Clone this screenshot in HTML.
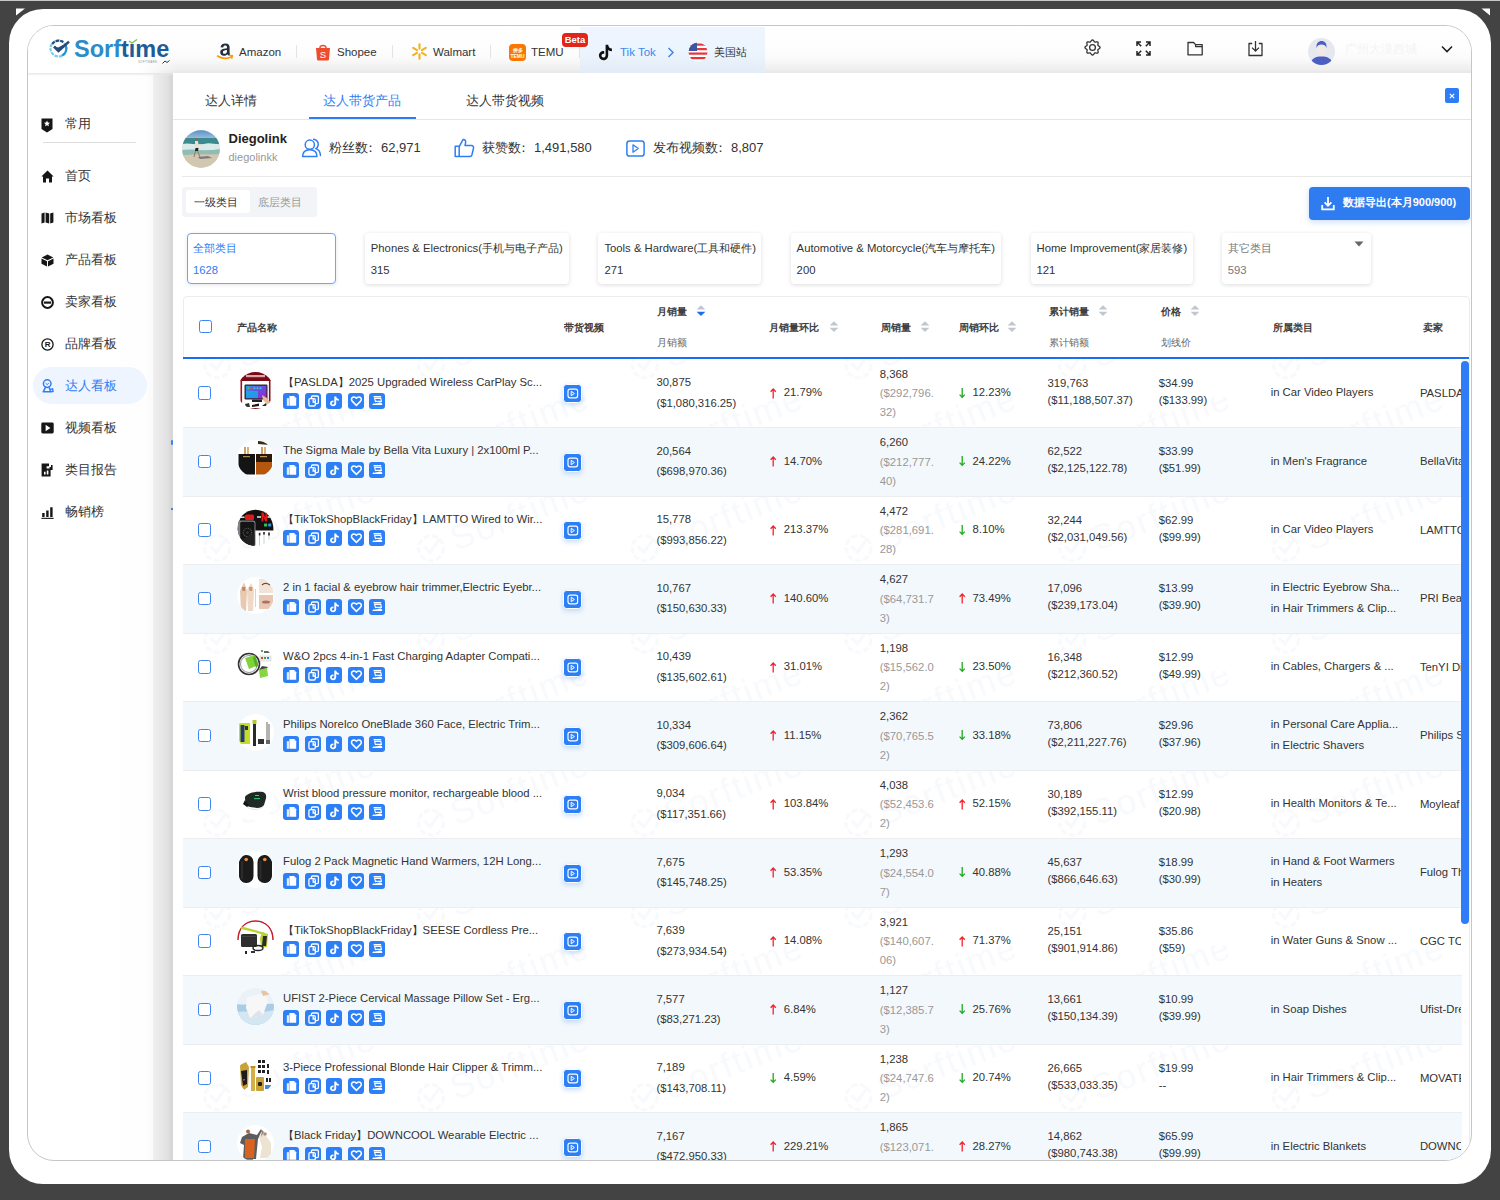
<!DOCTYPE html>
<html><head><meta charset="utf-8">
<style>
*{box-sizing:border-box;margin:0;padding:0}
html,body{width:1500px;height:1200px;overflow:hidden;background:#434343;font-family:"Liberation Sans",sans-serif;color:#333}
.abs{position:absolute}
#outer{position:absolute;left:9px;top:9px;width:1482px;height:1175px;background:#fff;border-radius:34px}
#frame{position:absolute;left:27px;top:25px;width:1445px;height:1136px;border:1px solid #c6c6c6;border-radius:27px;overflow:hidden;background:#fff}
#hdr{position:absolute;left:0;top:0;width:1443px;height:47px;background:linear-gradient(#fff 0,#fdfdfd 24px,#fbfbfb 31px,#f8f8f8 35px,#f3f3f3 39px,#eee 44px,#e8e8e8 46px,#e8e8e8 47px)}
#side{position:absolute;left:0;top:47px;width:146px;height:1100px}
#gap{position:absolute;left:92px;top:47px;width:53px;height:1100px;background:linear-gradient(90deg,#fefefe 0,#fefefe 25px,#fcfcfc 28px,#fafafa 33px,#efefef 33px,#e9e9e9 40px,#e0e0e0 48px,#d5d5d5 52px,#d8d8d8 53px)}
#panel{position:absolute;left:145px;top:47px;width:1298px;height:1100px;background:#fff}
.navt{position:absolute;top:19px;font-size:11.5px;line-height:14px;color:#333;white-space:nowrap}
.sep{position:absolute;top:19px;width:1px;height:13px;background:#e3e3e3}
.st{position:absolute;left:37px;font-size:13px;line-height:17px;color:#333;white-space:nowrap}
.sitem{position:absolute;left:0;width:120px;height:20px;font-size:13px;color:#333}
.sitem .ic{position:absolute;left:13px;top:3px;width:13px;height:13px}
.sitem .tx{position:absolute;left:37px;top:1px;white-space:nowrap}
</style></head><body>
<div class="abs" style="left:0;top:0;width:1500px;height:1px;background:#c8c8c8"></div>
<div id="outer"></div>
<svg class="abs" style="left:15px;top:8px" width="11" height="8" viewBox="0 0 11 8"><path d="M1 0.5 L10 0.5 L1 7.5 Z" fill="#fff"/></svg>
<svg class="abs" style="left:1481px;top:8px" width="10" height="8" viewBox="0 0 10 8"><path d="M0.5 0.5 L9 0.5 L9 7.5 Z" fill="#fff"/></svg>
<div id="frame">
  <div id="hdr">
    <div class="abs" style="left:0;top:0;width:150px;height:47px;background:linear-gradient(90deg,#fff 0,#fff 112px,rgba(255,255,255,0) 150px)"></div>
    <!-- logo -->
    <svg class="abs" style="left:21px;top:12px" width="22" height="22" viewBox="0 0 22 22">
      <circle cx="9.5" cy="10.5" r="8" fill="none" stroke="#7fcbe6" stroke-width="2.2" stroke-dasharray="3.4 1"/>
      <path d="M3.2 6 A8 8 0 0 1 14.5 4.2" fill="none" stroke="#2e4f7e" stroke-width="2.2" stroke-dasharray="3.4 1"/>
      <path d="M16.8 7.5 A8 8 0 0 1 13 17.6" fill="none" stroke="#2196d3" stroke-width="2.2"/>
      <path d="M5.2 8.6 L9.4 12.8 L19.8 3.8 L9.2 9.6 Z" fill="#2a4a78"/>
      <path d="M5 8.5 L9.5 13 L20 3.6" fill="none" stroke="#2a4a78" stroke-width="2.6" stroke-linejoin="miter"/>
    </svg>
    <div class="abs" style="left:46px;top:8px;font-size:23.5px;font-weight:bold;letter-spacing:0px;line-height:30px;white-space:nowrap"><span style="color:#2b8cc9">Sorf</span><span style="color:#1d5c98">time</span></div>
    <div class="abs" style="left:100px;top:12px;width:8px;height:6px;background:#fefefe"></div><svg class="abs" style="left:100px;top:13px" width="10" height="5" viewBox="0 0 10 5"><path d="M1 2 L4 4 L9 0.5" fill="none" stroke="#7cc242" stroke-width="1.3"/></svg>
    <div class="abs" style="left:110px;top:34px;width:45px;height:4px;font-size:3px;color:#999;white-space:nowrap;letter-spacing:0.3px">SOFTWARE</div><svg class="abs" style="left:134px;top:34px" width="8" height="4" viewBox="0 0 8 4"><path d="M0.5 3.5 L3 1 L5 2.5 L7.5 0.5" fill="none" stroke="#333" stroke-width="1"/></svg>

    <!-- amazon -->
    <svg class="abs" style="left:188px;top:16px" width="19" height="19" viewBox="0 0 19 19">
      <path d="M4.5 5.2 C5 2.6 7 1.6 9.4 1.6 C12.4 1.6 13.6 3.2 13.6 5.6 L13.6 10.6 C13.6 11.4 13.8 11.8 14.2 12.2 L12.4 13.6 C11.9 13.1 11.6 12.7 11.3 12.2 C10.3 13.2 9.2 13.8 7.8 13.8 C5.6 13.8 4.2 12.5 4.2 10.3 C4.2 7.6 6.4 6.5 11 6.2 L11 5.4 C11 4 10.4 3.6 9.3 3.6 C8.2 3.6 7.4 4.2 7.2 5.4 Z M11 8 C8 8.2 6.9 8.9 6.9 10.2 C6.9 11.2 7.5 11.8 8.4 11.8 C9.8 11.8 11 10.8 11 9.2 Z" fill="#232f3e"/>
      <path d="M1.6 14 C5.5 17 11.5 17.2 15.6 14.6" fill="none" stroke="#ff9900" stroke-width="1.6" stroke-linecap="round"/>
      <path d="M13.4 13.4 L16.4 13.6 L15.8 16.4" fill="none" stroke="#ff9900" stroke-width="1.4" stroke-linecap="round"/>
    </svg>
    <div class="navt" style="left:211px">Amazon</div>
    <div class="sep" style="left:268px"></div>

    <!-- shopee -->
    <svg class="abs" style="left:287px;top:17px" width="16" height="18" viewBox="0 0 16 18">
      <path d="M1 5 L15 5 L14 16.5 Q13.9 17.5 12.8 17.5 L3.2 17.5 Q2.1 17.5 2 16.5 Z" fill="#ee4d2d"/>
      <path d="M4.8 5.5 C4.8 1.5 11.2 1.5 11.2 5.5" fill="none" stroke="#ee4d2d" stroke-width="1.4"/>
      <text x="8" y="15" font-size="9.5" font-family="Liberation Sans" fill="#fff" text-anchor="middle">S</text>
    </svg>
    <div class="navt" style="left:309px">Shopee</div>
    <div class="sep" style="left:364px"></div>

    <!-- walmart -->
    <svg class="abs" style="left:383px;top:17px" width="17" height="17" viewBox="0 0 17 17">
      <g stroke="#f2b21b" stroke-width="2.1" stroke-linecap="round">
        <line x1="8.5" y1="1.2" x2="8.5" y2="5.6"/><line x1="8.5" y1="11.4" x2="8.5" y2="15.8"/>
        <line x1="2.2" y1="4.9" x2="6" y2="7.1"/><line x1="11" y1="9.9" x2="14.8" y2="12.1"/>
        <line x1="2.2" y1="12.1" x2="6" y2="9.9"/><line x1="11" y1="7.1" x2="14.8" y2="4.9"/>
      </g>
    </svg>
    <div class="navt" style="left:405px">Walmart</div>
    <div class="sep" style="left:462px"></div>

    <!-- temu -->
    <div class="abs" style="left:481px;top:18px;width:17px;height:17px;border-radius:4px;background:#fb7701;color:#fff;font-size:5px;line-height:6px;text-align:center;padding-top:3px;font-weight:bold">拼多<br>TEMU</div>
    <div class="navt" style="left:503px">TEMU</div>
    <div class="sep" style="left:551px"></div>

    <!-- tiktok active -->
    <div class="abs" style="left:552px;top:1px;width:185px;height:46px;background:linear-gradient(#eef5fe 0,#ecf4fd 55%,#e3ecf6 100%)"></div>
    <svg class="abs" style="left:570px;top:18px" width="15" height="17" viewBox="0 0 15 17">
      <path d="M7.6 0.8 L10.2 0.8 C10.4 3 11.6 4.4 13.9 4.6 L13.9 7.2 C12.5 7.2 11.3 6.8 10.2 6 L10.2 11.2 C10.2 14.2 8 16.2 5.4 16.2 C2.8 16.2 0.9 14.2 0.9 11.6 C0.9 8.8 3.2 6.8 6.2 7 L6.2 9.7 C4.6 9.4 3.5 10.3 3.5 11.6 C3.5 12.8 4.3 13.6 5.4 13.6 C6.6 13.6 7.6 12.8 7.6 11.2 Z" fill="#111"/>
    </svg>
    <div class="navt" style="left:592px;color:#3d88f0">Tik Tok</div>
    <svg class="abs" style="left:639px;top:21px" width="8" height="11" viewBox="0 0 8 11"><path d="M1.5 1 L6 5.5 L1.5 10" fill="none" stroke="#3d88f0" stroke-width="1.5"/></svg>
    <svg class="abs" style="left:660px;top:16px" width="20" height="20" viewBox="0 0 20 20">
      <defs><clipPath id="fc"><circle cx="10" cy="10" r="9.5"/></clipPath></defs>
      <g clip-path="url(#fc)">
        <rect x="0" y="0" width="20" height="20" fill="#fff"/>
        <rect x="0" y="1.5" width="20" height="2.2" fill="#e8343a"/>
        <rect x="0" y="6" width="20" height="2.2" fill="#e8343a"/>
        <rect x="0" y="10.5" width="20" height="2.2" fill="#e8343a"/>
        <rect x="0" y="15" width="20" height="2.2" fill="#e8343a"/>
        <rect x="0" y="0" width="9" height="9" fill="#3b55a5"/>
      </g>
    </svg>
    <div class="navt" style="left:686px;font-size:11px">美国站</div>

    <div class="abs" style="left:534px;top:7px;width:26px;height:14px;border-radius:4px;background:#e1251b;color:#fff;font-size:9.5px;font-weight:bold;line-height:14px;text-align:center">Beta</div>
    <!-- right icons -->
    <svg class="abs" style="left:1056px;top:13px" width="17" height="17" viewBox="0 0 17 17">
      <path d="M13.90 10.74 L13.85 11.14 L13.93 11.64 L14.07 12.22 L14.15 12.84 L14.09 13.40 L13.84 13.84 L13.40 14.09 L12.84 14.15 L12.22 14.07 L11.64 13.93 L11.14 13.85 L10.74 13.90 L10.42 14.15 L10.12 14.56 L9.81 15.07 L9.43 15.56 L8.99 15.92 L8.50 16.05 L8.01 15.92 L7.57 15.56 L7.19 15.07 L6.88 14.56 L6.58 14.15 L6.26 13.90 L5.86 13.85 L5.36 13.93 L4.78 14.07 L4.16 14.15 L3.60 14.09 L3.16 13.84 L2.91 13.40 L2.85 12.84 L2.93 12.22 L3.07 11.64 L3.15 11.14 L3.10 10.74 L2.85 10.42 L2.44 10.12 L1.93 9.81 L1.44 9.43 L1.08 8.99 L0.95 8.50 L1.08 8.01 L1.44 7.57 L1.93 7.19 L2.44 6.88 L2.85 6.58 L3.10 6.26 L3.15 5.86 L3.07 5.36 L2.93 4.78 L2.85 4.16 L2.91 3.60 L3.16 3.16 L3.60 2.91 L4.16 2.85 L4.78 2.93 L5.36 3.07 L5.86 3.15 L6.26 3.10 L6.58 2.85 L6.88 2.44 L7.19 1.93 L7.57 1.44 L8.01 1.08 L8.50 0.95 L8.99 1.08 L9.43 1.44 L9.81 1.93 L10.12 2.44 L10.42 2.85 L10.74 3.10 L11.14 3.15 L11.64 3.07 L12.22 2.93 L12.84 2.85 L13.40 2.91 L13.84 3.16 L14.09 3.60 L14.15 4.16 L14.07 4.78 L13.93 5.36 L13.85 5.86 L13.90 6.26 L14.15 6.58 L14.56 6.88 L15.07 7.19 L15.56 7.57 L15.92 8.01 L16.05 8.50 L15.92 8.99 L15.56 9.43 L15.07 9.81 L14.56 10.12 L14.15 10.42 Z" fill="none" stroke="#333" stroke-width="1.3" stroke-linejoin="round"/>
      <circle cx="8.5" cy="8.5" r="2.9" fill="none" stroke="#333" stroke-width="1.3"/>
    </svg>
    <svg class="abs" style="left:1107px;top:14px" width="17" height="17" viewBox="0 0 17 17">
      <g fill="none" stroke="#222" stroke-width="1.5">
        <path d="M2 6 L2 2 L6 2 M2 2 L6.2 6.2"/>
        <path d="M15 6 L15 2 L11 2 M15 2 L10.8 6.2"/>
        <path d="M2 11 L2 15 L6 15 M2 15 L6.2 10.8"/>
        <path d="M15 11 L15 15 L11 15 M15 15 L10.8 10.8"/>
      </g>
    </svg>
    <svg class="abs" style="left:1158px;top:14px" width="18" height="17" viewBox="0 0 18 17">
      <path d="M2 2.5 L7.6 2.5 L9.6 4.6 L16.2 4.6 L16.2 14.8 L2 14.8 Z M9.6 4.6 L9.6 6.6 L16.2 6.6" fill="none" stroke="#333" stroke-width="1.3" stroke-linejoin="round"/>
    </svg>
    <svg class="abs" style="left:1219px;top:14px" width="17" height="18" viewBox="0 0 17 18">
      <path d="M5.2 3.5 L2 3.5 L2 15.5 L15 15.5 L15 3.5 L11.8 3.5" fill="none" stroke="#333" stroke-width="1.3" stroke-linejoin="round"/>
      <path d="M8.5 1 L8.5 11 M5 7.6 L8.5 11 L12 7.6" fill="none" stroke="#333" stroke-width="1.3"/>
    </svg>
    <svg class="abs" style="left:1280px;top:12px" width="27" height="27" viewBox="0 0 27 27">
      <defs><clipPath id="av"><circle cx="13.5" cy="13.5" r="13.5"/></clipPath></defs>
      <circle cx="13.5" cy="13.5" r="13.5" fill="#e6e8f0"/>
      <g clip-path="url(#av)">
        <path d="M2 27 C3 20 8 18.5 13.5 18.5 C19 18.5 24 20 25 27 Z" fill="#4a5fc1"/>
        <ellipse cx="13.5" cy="11.5" rx="4.6" ry="6" fill="#f2e8e4"/>
        <path d="M8.6 10 C8 5 10.5 3 13.5 3 C16.8 3 19 5 18.4 10 C17.6 7.5 16 6.6 13.5 6.6 C11 6.6 9.4 7.5 8.6 10 Z" fill="#4a5fc1"/>
      </g>
    </svg>
    <div class="abs" style="left:1317px;top:15px;font-size:12px;color:#f4f4f4;white-space:nowrap">广州大漠西城</div>
    <svg class="abs" style="left:1412px;top:18px" width="14" height="10" viewBox="0 0 14 10"><path d="M2 2.5 L7 7.5 L12 2.5" fill="none" stroke="#222" stroke-width="1.6"/></svg>
  </div>

  <div id="gap"></div>
  <div id="side">
    <div class="abs" style="left:0;top:0;width:145px;height:3px;background:linear-gradient(#e6e6e6,rgba(240,240,240,0))"></div>
    <!-- frame coords offset: top of side = 47 -> subtract 73 from screen y -->
    <svg class="abs" style="left:13px;top:45px" width="12" height="15" viewBox="0 0 12 15">
      <path d="M0.5 0.5 L11.5 0.5 L11.5 11 L6 14.5 L0.5 11 Z" fill="#161616"/>
      <path d="M6 2.6 L6.9 4.6 L9 4.8 L7.4 6.2 L7.9 8.3 L6 7.2 L4.1 8.3 L4.6 6.2 L3 4.8 L5.1 4.6 Z" fill="#fff"/>
    </svg>
    <div class="st" style="top:41.5px">常用</div>
    <div class="abs" style="left:15px;top:69px;width:93px;height:1px;background:#dedede"></div>

    <svg class="abs" style="left:13px;top:97px" width="13" height="13" viewBox="0 0 13 13">
      <path d="M6.5 0.6 L12.6 6.4 L11 6.4 L11 12.6 L8 12.6 L8 8.6 L5 8.6 L5 12.6 L2 12.6 L2 6.4 L0.4 6.4 Z" fill="#161616"/>
    </svg>
    <div class="st" style="top:93.5px">首页</div>

    <svg class="abs" style="left:13px;top:139px" width="13" height="12" viewBox="0 0 13 12">
      <path d="M0.5 1.5 L3.6 0.5 L3.6 10.6 L0.5 11.6 Z M4.6 0.5 L8.2 1.5 L8.2 11.6 L4.6 10.6 Z M9.2 1.5 L12.4 0.5 L12.4 10.6 L9.2 11.6 Z" fill="#161616"/>
    </svg>
    <div class="st" style="top:135.5px">市场看板</div>

    <svg class="abs" style="left:13px;top:181px" width="13" height="13" viewBox="0 0 13 13">
      <path d="M6.5 0.4 L12.3 3.4 L6.5 6.3 L0.7 3.4 Z" fill="#161616"/>
      <path d="M0.5 4.4 L6 7.2 L6 12.6 L0.5 9.8 Z M7 7.2 L12.5 4.4 L12.5 9.8 L7 12.6 Z" fill="#161616"/>
    </svg>
    <div class="st" style="top:177.5px">产品看板</div>

    <svg class="abs" style="left:13px;top:223px" width="13" height="13" viewBox="0 0 13 13">
      <circle cx="6.5" cy="6.5" r="5.4" fill="none" stroke="#161616" stroke-width="2"/>
      <rect x="3" y="5.5" width="7" height="2.2" fill="#161616"/>
    </svg>
    <div class="st" style="top:219.5px">卖家看板</div>

    <svg class="abs" style="left:13px;top:265px" width="13" height="13" viewBox="0 0 13 13">
      <circle cx="6.5" cy="6.5" r="5.6" fill="none" stroke="#161616" stroke-width="1.3"/>
      <text x="6.6" y="9.4" font-size="8" font-family="Liberation Sans" font-weight="bold" fill="#161616" text-anchor="middle">R</text>
    </svg>
    <div class="st" style="top:261.5px">品牌看板</div>

    <div class="abs" style="left:5px;top:294px;width:114px;height:37px;border-radius:19px;background:#eef5ff"></div>
    <svg class="abs" style="left:14px;top:306px" width="12" height="14" viewBox="0 0 12 14">
      <circle cx="5.2" cy="4.6" r="3.8" fill="none" stroke="#2f7cf6" stroke-width="1.5"/>
      <path d="M3.6 4.2 L5.2 5.6 L6.8 4.2" fill="none" stroke="#2f7cf6" stroke-width="1"/>
      <path d="M3.6 8.2 L1.2 12.8 L8.8 12.8 L7 8.2" fill="none" stroke="#2f7cf6" stroke-width="1.5" stroke-linejoin="round"/>
      <path d="M8.2 10.4 L10.6 9.8 L11 12.4 L9 12.8" fill="none" stroke="#2f7cf6" stroke-width="1.4"/>
    </svg>
    <div class="st" style="top:303.5px;color:#2f7cf6">达人看板</div>

    <svg class="abs" style="left:13px;top:349px" width="13" height="12" viewBox="0 0 13 12">
      <rect x="0.3" y="0.5" width="12.4" height="11" rx="1.4" fill="#161616"/>
      <path d="M4.6 2.8 L9.4 6 L4.6 9.2 Z" fill="#fff"/>
    </svg>
    <div class="st" style="top:345.5px">视频看板</div>

    <svg class="abs" style="left:13px;top:390px" width="13" height="14" viewBox="0 0 13 14">
      <path d="M0.6 0.6 L8 0.6 L8 3.2 L5.6 3.2 L5.6 5.6 L8.6 5.6 L8.6 4 L10 4 L10 2 L11.6 2 L11.6 7 L9.6 7 L9.6 13.4 L0.6 13.4 Z" fill="#161616"/>
      <path d="M9 0.6 L12.4 0.6 L12.4 1.4 L9 1.4 Z M3 8.8 L4.6 8.8 L4.6 11.6 L3 11.6 Z M5.8 7.4 L7.4 7.4 L7.4 11.6 L5.8 11.6 Z" fill="#fff"/>
    </svg>
    <div class="st" style="top:387.5px">类目报告</div>

    <svg class="abs" style="left:13px;top:433px" width="13" height="13" viewBox="0 0 13 13">
      <path d="M1.2 7 L3.6 7 L3.6 11 L1.2 11 Z M5.2 4.4 L7.6 4.4 L7.6 11 L5.2 11 Z M9.2 1.2 L11.6 1.2 L11.6 11 L9.2 11 Z" fill="#161616"/>
      <rect x="0.4" y="11.8" width="12.2" height="1.1" fill="#161616"/>
    </svg>
    <div class="st" style="top:429.5px">畅销榜</div>
  </div>

<div class="abs" style="left:177.00px;top:67.00px;font-size:13px;line-height:16px;color:#333;white-space:nowrap">达人详情</div>
<div class="abs" style="left:294.50px;top:67.00px;font-size:13px;line-height:16px;color:#2f7df6;white-space:nowrap">达人带货产品</div>
<div class="abs" style="left:438.00px;top:67.00px;font-size:13px;line-height:16px;color:#333;white-space:nowrap">达人带货视频</div>
<div class="abs" style="left:145.00px;top:93.00px;width:1298px;height:1px;background:#e6e6e6"></div>
<div class="abs" style="left:281.00px;top:91.00px;width:107px;height:2px;background:#2f7df6"></div>
<div class="abs" style="left:1417.00px;top:62.00px;width:14px;height:15px;background:#2f7df6;border-radius:2px"></div>
<svg class="abs" style="left:1420.00px;top:66.00px" width="8" height="8" viewBox="0 0 8 8"><path d="M1.8 1.8 L6.2 6.2 M6.2 1.8 L1.8 6.2" stroke="#fff" stroke-width="1.2"/></svg>
<svg class="abs" style="left:154.00px;top:103.50px" width="38" height="38" viewBox="0 0 38 38"><defs><clipPath id="avc"><circle cx="19" cy="19" r="18.8"/></clipPath>
<linearGradient id="sky" x1="0" y1="0" x2="0" y2="1"><stop offset="0" stop-color="#5a8fc9"/><stop offset="1" stop-color="#9cc3df"/></linearGradient></defs>
<g clip-path="url(#avc)">
<rect width="38" height="38" fill="#cfc6b4"/>
<rect width="38" height="9" fill="url(#sky)"/>
<rect y="8" width="38" height="6" fill="#3c8a8f"/>
<path d="M0 14 C8 12 14 16 22 14 C28 12 34 15 38 14 L38 20 C30 22 20 19 10 22 L0 21 Z" fill="#d9ece9"/>
<path d="M0 20 C10 18 22 22 38 19 L38 24 C26 25 12 23 0 26 Z" fill="#8fbcb4"/>
<rect y="25" width="38" height="13" fill="#d2c7b0"/>
<path d="M16 27 L26 26 L30 28 L18 29 Z" fill="#5a5a60" opacity="0.7"/>
<circle cx="14.5" cy="9.5" r="1.4" fill="#8a6a50"/>
<path d="M13 11 L16 11 L17 18 L15.5 19 L13 18 Z" fill="#e8e0d6"/>
<path d="M13.5 18 L16.5 18 L16 21 L13 21 Z" fill="#222"/>
<path d="M13.5 21 L12 27 M15.5 21 L18 27" stroke="#9a7a5a" stroke-width="1"/>
</g></svg>
<div class="abs" style="left:200.50px;top:105.00px;font-size:13px;line-height:16px;font-weight:bold;color:#222;white-space:nowrap">Diegolink</div>
<div class="abs" style="left:200.50px;top:124.00px;font-size:11px;line-height:14px;color:#999;white-space:nowrap">diegolinkk</div>
<svg class="abs" style="left:273.00px;top:112.00px" width="21" height="20" viewBox="0 0 21 20"><g fill="none" stroke="#2f7df6" stroke-width="1.5" stroke-linecap="round"><circle cx="8.8" cy="6.7" r="4.6"/><path d="M1.6 18.6 C1.6 14 4.6 11.8 8.8 11.8 C13 11.8 16 14 16 18.6 Z" stroke-linejoin="round"/><path d="M12.6 1.2 C15.6 1.8 17.4 4.2 17.2 6.8 C17 8.6 16.2 9.8 15 10.6 C17.6 11.6 19.4 14 19.4 17.6"/></g></svg>
<div class="abs" style="left:301.00px;top:114.00px;font-size:13px;line-height:16px;color:#333;white-space:nowrap">粉丝数<span style="position:relative;left:-4px">：</span>62,971</div>
<svg class="abs" style="left:426.00px;top:112.00px" width="21" height="20" viewBox="0 0 21 20"><path d="M1.2 8.2 L5.2 8.2 L5.2 18.6 L1.2 18.6 Z M5.2 8.6 L9 1.6 C10.8 1.4 12 2.6 11.6 4.6 L11 7.6 L17.6 7.6 C19 7.6 19.8 8.8 19.5 10.2 L17.9 17 C17.6 18 16.8 18.6 15.8 18.6 L5.2 18.6" fill="none" stroke="#2f7df6" stroke-width="1.5" stroke-linejoin="round"/></svg>
<div class="abs" style="left:454.00px;top:114.00px;font-size:13px;line-height:16px;color:#333;white-space:nowrap">获赞数<span style="position:relative;left:-4px">：</span>1,491,580</div>
<svg class="abs" style="left:598.00px;top:113.50px" width="19" height="17" viewBox="0 0 19 17"><rect x="0.9" y="0.9" width="17.2" height="15.2" rx="2.6" fill="none" stroke="#2f7df6" stroke-width="1.5"/><path d="M7 4.8 L12.2 8.5 L7 12.2 Z" fill="none" stroke="#2f7df6" stroke-width="1.3" stroke-linejoin="round"/></svg>
<div class="abs" style="left:625.00px;top:114.00px;font-size:13px;line-height:16px;color:#333;white-space:nowrap">发布视频数<span style="position:relative;left:-4px">：</span>8,807</div>
<div class="abs" style="left:154.00px;top:150.00px;width:1289px;height:1px;background:#e8e8e8"></div>
<div class="abs" style="left:153.50px;top:160.50px;width:135px;height:30px;background:#f2f4f7;border-radius:3px"></div>
<div class="abs" style="left:157.50px;top:164.00px;width:64px;height:22.5px;background:#fff;border-radius:3px"></div>
<div class="abs" style="left:166.00px;top:168.50px;font-size:11px;line-height:14px;color:#333;white-space:nowrap">一级类目</div>
<div class="abs" style="left:230.00px;top:168.50px;font-size:11px;line-height:14px;color:#999;white-space:nowrap">底层类目</div>
<div class="abs" style="left:1281.00px;top:161.00px;width:161px;height:33px;background:#2e7cf0;border-radius:4px;box-shadow:0 2px 6px rgba(46,124,240,0.25)"></div>
<svg class="abs" style="left:1293.00px;top:170.00px" width="14" height="15" viewBox="0 0 14 15"><path d="M7 1 L7 9.6 M3.6 6.4 L7 9.8 L10.4 6.4" fill="none" stroke="#fff" stroke-width="1.8"/><path d="M1.2 9 L1.2 13.4 L12.8 13.4 L12.8 9" fill="none" stroke="#fff" stroke-width="1.8"/></svg>
<div class="abs" style="left:1315.00px;top:169.00px;font-size:11px;line-height:14px;color:#fff;font-weight:bold;white-space:nowrap">数据导出(本月900/900)</div>
<div class="abs" style="left:159.00px;top:206.50px;width:148.7px;height:51px;border:1px solid #6ea6f7;border-radius:4px;background:#fff;box-shadow:0 1px 4px rgba(0,0,0,0.10)"></div>
<div class="abs" style="left:165.00px;top:215.00px;font-size:11.3px;line-height:14px;color:#2f7df6;white-space:nowrap">全部类目</div>
<div class="abs" style="left:165.00px;top:236.50px;font-size:11.3px;line-height:14px;color:#2f7df6;white-space:nowrap">1628</div>
<div class="abs" style="left:336.80px;top:206.50px;width:204.5px;height:51px;border-radius:4px;background:#fff;box-shadow:0 1px 4px rgba(0,0,0,0.14)"></div>
<div class="abs" style="left:342.80px;top:215.00px;font-size:11.3px;line-height:14px;color:#333;white-space:nowrap">Phones &amp; Electronics(手机与电子产品)</div>
<div class="abs" style="left:342.80px;top:236.50px;font-size:11.3px;line-height:14px;color:#333;white-space:nowrap">315</div>
<div class="abs" style="left:570.40px;top:206.50px;width:162.8px;height:51px;border-radius:4px;background:#fff;box-shadow:0 1px 4px rgba(0,0,0,0.14)"></div>
<div class="abs" style="left:576.40px;top:215.00px;font-size:11.3px;line-height:14px;color:#333;white-space:nowrap">Tools &amp; Hardware(工具和硬件)</div>
<div class="abs" style="left:576.40px;top:236.50px;font-size:11.3px;line-height:14px;color:#333;white-space:nowrap">271</div>
<div class="abs" style="left:762.60px;top:206.50px;width:210.8px;height:51px;border-radius:4px;background:#fff;box-shadow:0 1px 4px rgba(0,0,0,0.14)"></div>
<div class="abs" style="left:768.60px;top:215.00px;font-size:11.3px;line-height:14px;color:#333;white-space:nowrap">Automotive &amp; Motorcycle(汽车与摩托车)</div>
<div class="abs" style="left:768.60px;top:236.50px;font-size:11.3px;line-height:14px;color:#333;white-space:nowrap">200</div>
<div class="abs" style="left:1002.50px;top:206.50px;width:162.2px;height:51px;border-radius:4px;background:#fff;box-shadow:0 1px 4px rgba(0,0,0,0.14)"></div>
<div class="abs" style="left:1008.50px;top:215.00px;font-size:11.3px;line-height:14px;color:#333;white-space:nowrap">Home Improvement(家居装修)</div>
<div class="abs" style="left:1008.50px;top:236.50px;font-size:11.3px;line-height:14px;color:#333;white-space:nowrap">121</div>
<div class="abs" style="left:1193.80px;top:206.50px;width:149.0px;height:51px;border-radius:4px;background:#fff;box-shadow:0 1px 4px rgba(0,0,0,0.14)"></div>
<div class="abs" style="left:1199.80px;top:215.00px;font-size:11.3px;line-height:14px;color:#777;white-space:nowrap">其它类目</div>
<div class="abs" style="left:1199.80px;top:236.50px;font-size:11.3px;line-height:14px;color:#777;white-space:nowrap">593</div>
<svg class="abs" style="left:1326.00px;top:215.00px" width="10" height="6" viewBox="0 0 10 6"><path d="M0.5 0.5 L9.5 0.5 L5 5.5 Z" fill="#666"/></svg>
<div class="abs" style="left:154.50px;top:269.50px;width:1287px;height:900px;border:1px solid #ececec;border-radius:4px;background:#fff"></div>
<div class="abs" style="left:171.00px;top:294.00px;width:13px;height:13.3px;border:1.5px solid #3d84f5;border-radius:2.5px;background:#fff"></div>
<div class="abs" style="left:209.00px;top:294.92px;font-size:10.34px;line-height:13px;color:#404040;font-weight:bold;white-space:nowrap;">产品名称</div>
<div class="abs" style="left:535.80px;top:294.92px;font-size:10.34px;line-height:13px;color:#404040;font-weight:bold;white-space:nowrap;">带货视频</div>
<div class="abs" style="left:629.00px;top:279.22px;font-size:10.34px;line-height:13px;color:#404040;font-weight:bold;white-space:nowrap;">月销量</div>
<svg class="abs" style="left:667.50px;top:279.00px" width="10" height="12" viewBox="0 0 10 12"><path d="M0.6 4.6 L5 0.3 L9.4 4.6 Z" fill="#c2c6ce"/><path d="M0.6 6.7 L9.4 6.7 L5 11 Z" fill="#1a6df5"/></svg>
<div class="abs" style="left:629.00px;top:310.12px;font-size:10.34px;line-height:13px;color:#666;font-weight:normal;white-space:nowrap;">月销额</div>
<div class="abs" style="left:741.00px;top:294.92px;font-size:10.34px;line-height:13px;color:#404040;font-weight:bold;white-space:nowrap;">月销量环比</div>
<svg class="abs" style="left:801.00px;top:295.00px" width="10" height="12" viewBox="0 0 10 12"><path d="M0.6 4.6 L5 0.3 L9.4 4.6 Z" fill="#c2c6ce"/><path d="M0.6 6.7 L9.4 6.7 L5 11 Z" fill="#c2c6ce"/></svg>
<div class="abs" style="left:853.00px;top:294.92px;font-size:10.34px;line-height:13px;color:#404040;font-weight:bold;white-space:nowrap;">周销量</div>
<svg class="abs" style="left:891.50px;top:295.00px" width="10" height="12" viewBox="0 0 10 12"><path d="M0.6 4.6 L5 0.3 L9.4 4.6 Z" fill="#c2c6ce"/><path d="M0.6 6.7 L9.4 6.7 L5 11 Z" fill="#c2c6ce"/></svg>
<div class="abs" style="left:930.80px;top:294.92px;font-size:10.34px;line-height:13px;color:#404040;font-weight:bold;white-space:nowrap;">周销环比</div>
<svg class="abs" style="left:979.30px;top:295.00px" width="10" height="12" viewBox="0 0 10 12"><path d="M0.6 4.6 L5 0.3 L9.4 4.6 Z" fill="#c2c6ce"/><path d="M0.6 6.7 L9.4 6.7 L5 11 Z" fill="#c2c6ce"/></svg>
<div class="abs" style="left:1020.50px;top:279.22px;font-size:10.34px;line-height:13px;color:#404040;font-weight:bold;white-space:nowrap;">累计销量</div>
<svg class="abs" style="left:1069.50px;top:279.00px" width="10" height="12" viewBox="0 0 10 12"><path d="M0.6 4.6 L5 0.3 L9.4 4.6 Z" fill="#c2c6ce"/><path d="M0.6 6.7 L9.4 6.7 L5 11 Z" fill="#c2c6ce"/></svg>
<div class="abs" style="left:1020.50px;top:310.12px;font-size:10.34px;line-height:13px;color:#666;font-weight:normal;white-space:nowrap;">累计销额</div>
<div class="abs" style="left:1133.30px;top:279.22px;font-size:10.34px;line-height:13px;color:#404040;font-weight:bold;white-space:nowrap;">价格</div>
<svg class="abs" style="left:1161.50px;top:279.00px" width="10" height="12" viewBox="0 0 10 12"><path d="M0.6 4.6 L5 0.3 L9.4 4.6 Z" fill="#c2c6ce"/><path d="M0.6 6.7 L9.4 6.7 L5 11 Z" fill="#c2c6ce"/></svg>
<div class="abs" style="left:1133.30px;top:310.12px;font-size:10.34px;line-height:13px;color:#666;font-weight:normal;white-space:nowrap;">划线价</div>
<div class="abs" style="left:1245.40px;top:294.92px;font-size:10.34px;line-height:13px;color:#404040;font-weight:bold;white-space:nowrap;">所属类目</div>
<div class="abs" style="left:1394.80px;top:294.92px;font-size:10.34px;line-height:13px;color:#404040;font-weight:bold;white-space:nowrap;">卖家</div>
<div class="abs" style="left:155.00px;top:331.00px;width:1286px;height:2px;background:#1a6df5"></div>
<div class="abs" style="left:155.00px;top:333.50px;width:1278.5px;height:68.5px;background:#fff;border-bottom:1px solid #ebedf0"></div>
<div class="abs" style="left:155.00px;top:470.50px;width:1278.5px;height:68.5px;background:#fff;border-bottom:1px solid #ebedf0"></div>
<div class="abs" style="left:155.00px;top:607.50px;width:1278.5px;height:68.5px;background:#fff;border-bottom:1px solid #ebedf0"></div>
<div class="abs" style="left:155.00px;top:744.50px;width:1278.5px;height:68.5px;background:#fff;border-bottom:1px solid #ebedf0"></div>
<div class="abs" style="left:155.00px;top:881.50px;width:1278.5px;height:68.5px;background:#fff;border-bottom:1px solid #ebedf0"></div>
<div class="abs" style="left:155.00px;top:1018.50px;width:1278.5px;height:68.5px;background:#fff;border-bottom:1px solid #ebedf0"></div>
<svg class="abs" style="left:155.00px;top:333.00px" width="1278" height="801" viewBox="0 0 1278 801"><defs><pattern id="wm" patternUnits="userSpaceOnUse" x="9.25" y="-53.80" width="213.75" height="91.5"><g opacity="0.04"><circle cx="25" cy="60" r="12.5" fill="none" stroke="#2a5a9a" stroke-width="3" stroke-dasharray="6 2.5"/><path d="M18 58 L24 64 L34 50" fill="none" stroke="#2a5a9a" stroke-width="3"/><text x="0" y="0" transform="translate(50 63) rotate(-21)" font-family="Liberation Sans" font-size="35" letter-spacing="2" fill="#2a5a9a">Sorftime</text></g></pattern></defs><rect width="1278" height="801" fill="url(#wm)"/></svg>
<div class="abs" style="left:155.00px;top:401.00px;width:1278.5px;height:1px;background:#ebedf0"></div>
<div class="abs" style="left:155.00px;top:402.00px;width:1278.5px;height:68.5px;background:#f3f8fc;border-bottom:1px solid #ebedf0"></div>
<div class="abs" style="left:155.00px;top:538.00px;width:1278.5px;height:1px;background:#ebedf0"></div>
<div class="abs" style="left:155.00px;top:539.00px;width:1278.5px;height:68.5px;background:#f3f8fc;border-bottom:1px solid #ebedf0"></div>
<div class="abs" style="left:155.00px;top:675.00px;width:1278.5px;height:1px;background:#ebedf0"></div>
<div class="abs" style="left:155.00px;top:676.00px;width:1278.5px;height:68.5px;background:#f3f8fc;border-bottom:1px solid #ebedf0"></div>
<div class="abs" style="left:155.00px;top:812.00px;width:1278.5px;height:1px;background:#ebedf0"></div>
<div class="abs" style="left:155.00px;top:813.00px;width:1278.5px;height:68.5px;background:#f3f8fc;border-bottom:1px solid #ebedf0"></div>
<div class="abs" style="left:155.00px;top:949.00px;width:1278.5px;height:1px;background:#ebedf0"></div>
<div class="abs" style="left:155.00px;top:950.00px;width:1278.5px;height:68.5px;background:#f3f8fc;border-bottom:1px solid #ebedf0"></div>
<div class="abs" style="left:155.00px;top:1086.00px;width:1278.5px;height:1px;background:#ebedf0"></div>
<div class="abs" style="left:155.00px;top:1087.00px;width:1278.5px;height:68.5px;background:#f3f8fc;border-bottom:1px solid #ebedf0"></div>
<div class="abs" style="left:170.20px;top:360.25px;width:13px;height:13.3px;border:1.5px solid #3d84f5;border-radius:2.5px;background:#fff"></div>
<svg class="abs" style="left:208.50px;top:345.50px" width="37" height="37" viewBox="0 0 37 37"><defs><clipPath id="pc0"><circle cx="18.5" cy="18.5" r="18.5"/></clipPath></defs><g clip-path="url(#pc0)"><rect width="37" height="37" fill="#fff"/>
<defs><linearGradient id="scr0" x1="0" y1="0" x2="1" y2="1"><stop offset="0" stop-color="#2aa0e8"/><stop offset="0.5" stop-color="#6a4ae0"/><stop offset="1" stop-color="#a020d0"/></linearGradient></defs>
<rect x="3.5" y="0" width="30" height="9" fill="#7a0a14"/>
<rect x="3.5" y="8" width="1.6" height="24" fill="#a01020"/>
<rect x="31.9" y="8" width="1.6" height="24" fill="#8a0c18"/>
<rect x="9" y="3" width="19" height="2.2" fill="#f0d0d0" opacity="0.8"/>
<rect x="7.5" y="12.5" width="23" height="15" rx="1.2" fill="#2a2a2a"/>
<rect x="8.8" y="13.8" width="20.5" height="12.5" fill="url(#scr0)"/>
<rect x="9" y="19" width="12" height="7" fill="#10b0e8" opacity="0.8"/>
<circle cx="11.5" cy="16.2" r="1" fill="#3cd060"/><circle cx="14.5" cy="16.2" r="1" fill="#ef4040"/><circle cx="17.5" cy="16.2" r="1" fill="#40c0f0"/><circle cx="20.5" cy="16.2" r="1" fill="#50d070"/><circle cx="23.5" cy="16.2" r="1" fill="#40c8f0"/>
<path d="M25 23 L30 26 L34 31 L31 33 L26 28 Z" fill="#e8b896"/>
<rect x="15" y="27.5" width="10" height="2.5" fill="#222"/>
<path d="M8 32 L12 31 L13 35 L9 35 Z" fill="#333"/><path d="M15 33 L22 31.5 L22 34 L15 35 Z" fill="#1a1a1a"/><path d="M25 34 L29 31 L30 34 Z" fill="#222"/>
<rect x="12" y="36" width="13" height="1" fill="#8a1020"/></g></svg>
<div class="abs" style="left:255.00px;top:348.98px;font-size:11.3px;line-height:15px;color:#333;font-weight:normal;white-space:nowrap;">【PASLDA】2025 Upgraded Wireless CarPlay Sc...</div>
<div class="abs" style="left:255.00px;top:367.00px;width:16.4px;height:16.4px;background:#2d7ff5;border-radius:3px"></div>
<svg class="abs" style="left:255.00px;top:367.00px" width="16" height="16" viewBox="0 0 16 16"><path d="M3.8 5.2 L6 5.2 L6 12.8 L3.8 12.8 Z" fill="#fff" opacity="0.85"/><path d="M6.4 3 L11 3 L13.2 5.2 L13.2 12.8 L6.4 12.8 Z" fill="#fff"/><path d="M11 3 L11 5.2 L13.2 5.2" fill="#cfe0fb"/></svg>
<div class="abs" style="left:276.50px;top:367.00px;width:16.4px;height:16.4px;background:#2d7ff5;border-radius:3px"></div>
<svg class="abs" style="left:276.50px;top:367.00px" width="16" height="16" viewBox="0 0 16 16"><rect x="6.4" y="3" width="7" height="7.6" rx="1.3" fill="none" stroke="#fff" stroke-width="1.3"/><rect x="3.9" y="5.6" width="6.4" height="7.4" rx="1.3" fill="#2d7ff5" stroke="#fff" stroke-width="1.3"/><path d="M8.2 6.2 L8.2 9 L10.6 9" fill="none" stroke="#fff" stroke-width="1.4"/></svg>
<div class="abs" style="left:298.00px;top:367.00px;width:16.4px;height:16.4px;background:#2d7ff5;border-radius:3px"></div>
<svg class="abs" style="left:298.00px;top:367.00px" width="16" height="16" viewBox="0 0 16 16"><path d="M8.3 3.6 L10.2 3.6 C10.4 5 11.3 5.9 12.8 6 L12.8 7.8 C11.8 7.8 10.9 7.5 10.2 7 L10.2 10.2 C10.2 12.1 8.8 13.2 7.1 13.2 C5.3 13.2 4 11.9 4 10.3 C4 8.5 5.5 7.2 7.5 7.4 L7.5 9.2 C6.5 9 5.8 9.6 5.8 10.3 C5.8 11.1 6.4 11.5 7.1 11.5 C7.9 11.5 8.3 11 8.3 10.1 Z" fill="#fff"/></svg>
<div class="abs" style="left:319.50px;top:367.00px;width:16.4px;height:16.4px;background:#2d7ff5;border-radius:3px"></div>
<svg class="abs" style="left:319.50px;top:367.00px" width="16" height="16" viewBox="0 0 16 16"><path d="M8.4 12.4 L4.4 8.4 C3 7 3.2 4.9 4.8 4.2 C6.2 3.6 7.6 4.1 8.4 5.3 C9.2 4.1 10.6 3.6 12 4.2 C13.6 4.9 13.8 7 12.4 8.4 Z" fill="none" stroke="#fff" stroke-width="1.5" stroke-linejoin="round"/></svg>
<div class="abs" style="left:341.00px;top:367.00px;width:16.4px;height:16.4px;background:#2d7ff5;border-radius:3px"></div>
<svg class="abs" style="left:341.00px;top:367.00px" width="16" height="16" viewBox="0 0 16 16"><path d="M4.6 3 L12.2 3 L12.2 4.4 L4.6 4.4 Z" fill="#fff"/><path d="M5.6 5.4 L11.8 5.4 L12.4 8.4 L6.4 8.4 Z" fill="none" stroke="#fff" stroke-width="1.1"/><path d="M3.2 12 C4.6 9.6 6.6 9.2 8.2 10.2 L10.6 9.6 C11.6 9.4 12.6 10 13.2 10.8 L13.2 12 Z" fill="#fff"/><path d="M5.2 10.6 L9 9.2" stroke="#2d7ff5" stroke-width="0.8"/></svg>
<div class="abs" style="left:534.80px;top:358.30px;width:19.2px;height:19px;background:#2d7ff5;border-radius:3.5px;border:1px solid #fff;box-shadow:0 2px 5px rgba(45,127,245,0.25)"></div>
<svg class="abs" style="left:534.80px;top:358.30px" width="19" height="19" viewBox="0 0 19 19"><rect x="5" y="5.2" width="9.6" height="8.6" rx="2" fill="none" stroke="#fff" stroke-width="1.2"/><path d="M8.2 7.3 L11.4 9.5 L8.2 11.7 Z" fill="none" stroke="#fff" stroke-width="1"/></svg>
<div class="abs" style="left:628.40px;top:349.38px;font-size:11.3px;line-height:15px;color:#333;font-weight:normal;white-space:nowrap;">30,875</div>
<div class="abs" style="left:628.40px;top:369.68px;font-size:11.3px;line-height:15px;color:#333;font-weight:normal;white-space:nowrap;">($1,080,316.25)</div>
<svg class="abs" style="left:742.20px;top:361.50px" width="7" height="11" viewBox="0 0 7 11"><path d="M3.2 10.4 L3.2 1.2 M0.6 3.8 L3.2 1.0 L5.8 3.8" fill="none" stroke="#f5222d" stroke-width="1.3"/></svg>
<div class="abs" style="left:755.80px;top:359.48px;font-size:11.3px;line-height:15px;color:#333;font-weight:normal;white-space:nowrap;">21.79%</div>
<div class="abs" style="left:851.80px;top:340.58px;font-size:11.3px;line-height:15px;color:#333;font-weight:normal;white-space:nowrap;">8,368</div>
<div class="abs" style="left:851.80px;top:360.08px;font-size:11.3px;line-height:15px;color:#999;font-weight:normal;white-space:nowrap;">($292,796.</div>
<div class="abs" style="left:851.80px;top:379.08px;font-size:11.3px;line-height:15px;color:#999;font-weight:normal;white-space:nowrap;">32)</div>
<svg class="abs" style="left:930.60px;top:361.50px" width="7" height="11" viewBox="0 0 7 11"><path d="M3.2 0 L3.2 9.2 M0.6 6.6 L3.2 9.4 L5.8 6.6" fill="none" stroke="#1faa1f" stroke-width="1.3"/></svg>
<div class="abs" style="left:944.50px;top:359.48px;font-size:11.3px;line-height:15px;color:#333;font-weight:normal;white-space:nowrap;">12.23%</div>
<div class="abs" style="left:1019.50px;top:349.78px;font-size:11.3px;line-height:15px;color:#333;font-weight:normal;white-space:nowrap;">319,763</div>
<div class="abs" style="left:1019.50px;top:366.58px;font-size:11.3px;line-height:15px;color:#333;font-weight:normal;white-space:nowrap;">($11,188,507.37)</div>
<div class="abs" style="left:1130.80px;top:349.78px;font-size:11.3px;line-height:15px;color:#333;font-weight:normal;white-space:nowrap;">$34.99</div>
<div class="abs" style="left:1130.80px;top:366.58px;font-size:11.3px;line-height:15px;color:#333;font-weight:normal;white-space:nowrap;">($133.99)</div>
<div class="abs" style="left:1242.70px;top:359.08px;font-size:11.3px;line-height:15px;color:#333;font-weight:normal;white-space:nowrap;">in Car Video Players</div>
<div class="abs" style="left:1391.90px;top:359.50px;width:41.5px;height:16px;overflow:hidden;"><div style="position:absolute;left:0;top:0;font-size:11.3px;line-height:15px;color:#333;white-space:nowrap">PASLDA</div></div>
<div class="abs" style="left:170.20px;top:428.75px;width:13px;height:13.3px;border:1.5px solid #3d84f5;border-radius:2.5px;background:#fff"></div>
<svg class="abs" style="left:208.50px;top:414.00px" width="37" height="37" viewBox="0 0 37 37"><defs><clipPath id="pc1"><circle cx="18.5" cy="18.5" r="18.5"/></clipPath></defs><g clip-path="url(#pc1)"><rect width="37" height="37" fill="#fff"/>
<rect x="7" y="7" width="2" height="7" fill="#c9a26b"/><rect x="10" y="7" width="2" height="7" fill="#d8b47a"/>
<rect x="24" y="7" width="2" height="7" fill="#c9a26b"/><rect x="27" y="7" width="2" height="7" fill="#d8b47a"/>
<path d="M21 1 L31 2 L33 5 L21 4 Z" fill="#3a2a18"/>
<path d="M1.5 14 L18 14 L18 34.5 L6 34.5 L1.5 29 Z" fill="#141414"/>
<path d="M19 14 L35 14 L35 29 L31 34.5 L19 34.5 Z" fill="#b5560e"/>
<path d="M19 14 L35 14 L35 22 L19 22 Z" fill="#2a1a0e"/>
<rect x="6" y="16" width="7" height="1.2" fill="#b08a4a"/><rect x="23" y="16" width="7" height="1.2" fill="#c09a5a"/></g></svg>
<div class="abs" style="left:255.00px;top:417.48px;font-size:11.3px;line-height:15px;color:#333;font-weight:normal;white-space:nowrap;">The Sigma Male by Bella Vita Luxury | 2x100ml P...</div>
<div class="abs" style="left:255.00px;top:435.50px;width:16.4px;height:16.4px;background:#2d7ff5;border-radius:3px"></div>
<svg class="abs" style="left:255.00px;top:435.50px" width="16" height="16" viewBox="0 0 16 16"><path d="M3.8 5.2 L6 5.2 L6 12.8 L3.8 12.8 Z" fill="#fff" opacity="0.85"/><path d="M6.4 3 L11 3 L13.2 5.2 L13.2 12.8 L6.4 12.8 Z" fill="#fff"/><path d="M11 3 L11 5.2 L13.2 5.2" fill="#cfe0fb"/></svg>
<div class="abs" style="left:276.50px;top:435.50px;width:16.4px;height:16.4px;background:#2d7ff5;border-radius:3px"></div>
<svg class="abs" style="left:276.50px;top:435.50px" width="16" height="16" viewBox="0 0 16 16"><rect x="6.4" y="3" width="7" height="7.6" rx="1.3" fill="none" stroke="#fff" stroke-width="1.3"/><rect x="3.9" y="5.6" width="6.4" height="7.4" rx="1.3" fill="#2d7ff5" stroke="#fff" stroke-width="1.3"/><path d="M8.2 6.2 L8.2 9 L10.6 9" fill="none" stroke="#fff" stroke-width="1.4"/></svg>
<div class="abs" style="left:298.00px;top:435.50px;width:16.4px;height:16.4px;background:#2d7ff5;border-radius:3px"></div>
<svg class="abs" style="left:298.00px;top:435.50px" width="16" height="16" viewBox="0 0 16 16"><path d="M8.3 3.6 L10.2 3.6 C10.4 5 11.3 5.9 12.8 6 L12.8 7.8 C11.8 7.8 10.9 7.5 10.2 7 L10.2 10.2 C10.2 12.1 8.8 13.2 7.1 13.2 C5.3 13.2 4 11.9 4 10.3 C4 8.5 5.5 7.2 7.5 7.4 L7.5 9.2 C6.5 9 5.8 9.6 5.8 10.3 C5.8 11.1 6.4 11.5 7.1 11.5 C7.9 11.5 8.3 11 8.3 10.1 Z" fill="#fff"/></svg>
<div class="abs" style="left:319.50px;top:435.50px;width:16.4px;height:16.4px;background:#2d7ff5;border-radius:3px"></div>
<svg class="abs" style="left:319.50px;top:435.50px" width="16" height="16" viewBox="0 0 16 16"><path d="M8.4 12.4 L4.4 8.4 C3 7 3.2 4.9 4.8 4.2 C6.2 3.6 7.6 4.1 8.4 5.3 C9.2 4.1 10.6 3.6 12 4.2 C13.6 4.9 13.8 7 12.4 8.4 Z" fill="none" stroke="#fff" stroke-width="1.5" stroke-linejoin="round"/></svg>
<div class="abs" style="left:341.00px;top:435.50px;width:16.4px;height:16.4px;background:#2d7ff5;border-radius:3px"></div>
<svg class="abs" style="left:341.00px;top:435.50px" width="16" height="16" viewBox="0 0 16 16"><path d="M4.6 3 L12.2 3 L12.2 4.4 L4.6 4.4 Z" fill="#fff"/><path d="M5.6 5.4 L11.8 5.4 L12.4 8.4 L6.4 8.4 Z" fill="none" stroke="#fff" stroke-width="1.1"/><path d="M3.2 12 C4.6 9.6 6.6 9.2 8.2 10.2 L10.6 9.6 C11.6 9.4 12.6 10 13.2 10.8 L13.2 12 Z" fill="#fff"/><path d="M5.2 10.6 L9 9.2" stroke="#2d7ff5" stroke-width="0.8"/></svg>
<div class="abs" style="left:534.80px;top:426.80px;width:19.2px;height:19px;background:#2d7ff5;border-radius:3.5px;border:1px solid #fff;box-shadow:0 2px 5px rgba(45,127,245,0.25)"></div>
<svg class="abs" style="left:534.80px;top:426.80px" width="19" height="19" viewBox="0 0 19 19"><rect x="5" y="5.2" width="9.6" height="8.6" rx="2" fill="none" stroke="#fff" stroke-width="1.2"/><path d="M8.2 7.3 L11.4 9.5 L8.2 11.7 Z" fill="none" stroke="#fff" stroke-width="1"/></svg>
<div class="abs" style="left:628.40px;top:417.88px;font-size:11.3px;line-height:15px;color:#333;font-weight:normal;white-space:nowrap;">20,564</div>
<div class="abs" style="left:628.40px;top:438.18px;font-size:11.3px;line-height:15px;color:#333;font-weight:normal;white-space:nowrap;">($698,970.36)</div>
<svg class="abs" style="left:742.20px;top:430.00px" width="7" height="11" viewBox="0 0 7 11"><path d="M3.2 10.4 L3.2 1.2 M0.6 3.8 L3.2 1.0 L5.8 3.8" fill="none" stroke="#f5222d" stroke-width="1.3"/></svg>
<div class="abs" style="left:755.80px;top:427.98px;font-size:11.3px;line-height:15px;color:#333;font-weight:normal;white-space:nowrap;">14.70%</div>
<div class="abs" style="left:851.80px;top:409.08px;font-size:11.3px;line-height:15px;color:#333;font-weight:normal;white-space:nowrap;">6,260</div>
<div class="abs" style="left:851.80px;top:428.58px;font-size:11.3px;line-height:15px;color:#999;font-weight:normal;white-space:nowrap;">($212,777.</div>
<div class="abs" style="left:851.80px;top:447.58px;font-size:11.3px;line-height:15px;color:#999;font-weight:normal;white-space:nowrap;">40)</div>
<svg class="abs" style="left:930.60px;top:430.00px" width="7" height="11" viewBox="0 0 7 11"><path d="M3.2 0 L3.2 9.2 M0.6 6.6 L3.2 9.4 L5.8 6.6" fill="none" stroke="#1faa1f" stroke-width="1.3"/></svg>
<div class="abs" style="left:944.50px;top:427.98px;font-size:11.3px;line-height:15px;color:#333;font-weight:normal;white-space:nowrap;">24.22%</div>
<div class="abs" style="left:1019.50px;top:418.28px;font-size:11.3px;line-height:15px;color:#333;font-weight:normal;white-space:nowrap;">62,522</div>
<div class="abs" style="left:1019.50px;top:435.08px;font-size:11.3px;line-height:15px;color:#333;font-weight:normal;white-space:nowrap;">($2,125,122.78)</div>
<div class="abs" style="left:1130.80px;top:418.28px;font-size:11.3px;line-height:15px;color:#333;font-weight:normal;white-space:nowrap;">$33.99</div>
<div class="abs" style="left:1130.80px;top:435.08px;font-size:11.3px;line-height:15px;color:#333;font-weight:normal;white-space:nowrap;">($51.99)</div>
<div class="abs" style="left:1242.70px;top:427.58px;font-size:11.3px;line-height:15px;color:#333;font-weight:normal;white-space:nowrap;">in Men's Fragrance</div>
<div class="abs" style="left:1391.90px;top:428.00px;width:41.5px;height:16px;overflow:hidden;"><div style="position:absolute;left:0;top:0;font-size:11.3px;line-height:15px;color:#333;white-space:nowrap">BellaVita</div></div>
<div class="abs" style="left:170.20px;top:497.25px;width:13px;height:13.3px;border:1.5px solid #3d84f5;border-radius:2.5px;background:#fff"></div>
<svg class="abs" style="left:208.50px;top:482.50px" width="37" height="37" viewBox="0 0 37 37"><defs><clipPath id="pc2"><circle cx="18.5" cy="18.5" r="18.5"/></clipPath></defs><g clip-path="url(#pc2)"><rect width="37" height="37" fill="#fff"/>
<path d="M0.5 21 C0.5 9 8 0.8 18.5 0.8 C29 0.8 36.5 9 36.5 21 L36.5 21.5 L0.5 21.5 Z" fill="#141010"/>
<rect x="8" y="5.5" width="9" height="5.5" rx="1.6" fill="#e01818"/>
<rect x="4" y="7.5" width="3.5" height="1.5" fill="#ddd"/>
<path d="M24.5 3.5 L26.4 3.5 L28.4 8.6 L28.4 3.5 L30 3.5 L30 12.5 L28.2 12.5 L26.2 7.4 L26.2 12.5 L24.5 12.5 Z" fill="#e01818"/>
<rect x="20" y="7.2" width="4" height="1.6" fill="#ddd"/><rect x="30.5" y="7.2" width="3" height="1.6" fill="#ddd"/>
<rect x="27" y="14.5" width="3.2" height="3" rx="0.6" fill="#30c050"/><rect x="31.2" y="14.5" width="3" height="3" rx="0.6" fill="#3090e0"/>
<rect x="1" y="11.5" width="17.5" height="26" rx="2.5" fill="#7d8388"/>
<rect x="3.2" y="12.8" width="14.3" height="24" rx="1.5" fill="#141414"/>
<circle cx="10.5" cy="23.5" r="4.2" fill="none" stroke="#555" stroke-width="1.2" stroke-dasharray="1 0.8"/>
<circle cx="10.5" cy="23.5" r="1.5" fill="#333"/>
<path d="M3.2 31 L17.5 25 L17.5 36.8 L3.2 36.8 Z" fill="#222"/>
<g stroke="#c8c8c8" stroke-width="0.9" fill="none"><path d="M22.5 26 L22.5 36 C22.5 37.5 25 37.5 25 36"/><path d="M27 25 L27 35"/><path d="M32 25 L32 31"/></g>
<rect x="21.8" y="23.8" width="1.6" height="2.6" fill="#222"/><rect x="26.2" y="23" width="1.6" height="2.6" fill="#222"/><rect x="31.2" y="23.5" width="1.6" height="3" fill="#222"/></g></svg>
<div class="abs" style="left:255.00px;top:485.98px;font-size:11.3px;line-height:15px;color:#333;font-weight:normal;white-space:nowrap;">【TikTokShopBlackFriday】LAMTTO Wired to Wir...</div>
<div class="abs" style="left:255.00px;top:504.00px;width:16.4px;height:16.4px;background:#2d7ff5;border-radius:3px"></div>
<svg class="abs" style="left:255.00px;top:504.00px" width="16" height="16" viewBox="0 0 16 16"><path d="M3.8 5.2 L6 5.2 L6 12.8 L3.8 12.8 Z" fill="#fff" opacity="0.85"/><path d="M6.4 3 L11 3 L13.2 5.2 L13.2 12.8 L6.4 12.8 Z" fill="#fff"/><path d="M11 3 L11 5.2 L13.2 5.2" fill="#cfe0fb"/></svg>
<div class="abs" style="left:276.50px;top:504.00px;width:16.4px;height:16.4px;background:#2d7ff5;border-radius:3px"></div>
<svg class="abs" style="left:276.50px;top:504.00px" width="16" height="16" viewBox="0 0 16 16"><rect x="6.4" y="3" width="7" height="7.6" rx="1.3" fill="none" stroke="#fff" stroke-width="1.3"/><rect x="3.9" y="5.6" width="6.4" height="7.4" rx="1.3" fill="#2d7ff5" stroke="#fff" stroke-width="1.3"/><path d="M8.2 6.2 L8.2 9 L10.6 9" fill="none" stroke="#fff" stroke-width="1.4"/></svg>
<div class="abs" style="left:298.00px;top:504.00px;width:16.4px;height:16.4px;background:#2d7ff5;border-radius:3px"></div>
<svg class="abs" style="left:298.00px;top:504.00px" width="16" height="16" viewBox="0 0 16 16"><path d="M8.3 3.6 L10.2 3.6 C10.4 5 11.3 5.9 12.8 6 L12.8 7.8 C11.8 7.8 10.9 7.5 10.2 7 L10.2 10.2 C10.2 12.1 8.8 13.2 7.1 13.2 C5.3 13.2 4 11.9 4 10.3 C4 8.5 5.5 7.2 7.5 7.4 L7.5 9.2 C6.5 9 5.8 9.6 5.8 10.3 C5.8 11.1 6.4 11.5 7.1 11.5 C7.9 11.5 8.3 11 8.3 10.1 Z" fill="#fff"/></svg>
<div class="abs" style="left:319.50px;top:504.00px;width:16.4px;height:16.4px;background:#2d7ff5;border-radius:3px"></div>
<svg class="abs" style="left:319.50px;top:504.00px" width="16" height="16" viewBox="0 0 16 16"><path d="M8.4 12.4 L4.4 8.4 C3 7 3.2 4.9 4.8 4.2 C6.2 3.6 7.6 4.1 8.4 5.3 C9.2 4.1 10.6 3.6 12 4.2 C13.6 4.9 13.8 7 12.4 8.4 Z" fill="none" stroke="#fff" stroke-width="1.5" stroke-linejoin="round"/></svg>
<div class="abs" style="left:341.00px;top:504.00px;width:16.4px;height:16.4px;background:#2d7ff5;border-radius:3px"></div>
<svg class="abs" style="left:341.00px;top:504.00px" width="16" height="16" viewBox="0 0 16 16"><path d="M4.6 3 L12.2 3 L12.2 4.4 L4.6 4.4 Z" fill="#fff"/><path d="M5.6 5.4 L11.8 5.4 L12.4 8.4 L6.4 8.4 Z" fill="none" stroke="#fff" stroke-width="1.1"/><path d="M3.2 12 C4.6 9.6 6.6 9.2 8.2 10.2 L10.6 9.6 C11.6 9.4 12.6 10 13.2 10.8 L13.2 12 Z" fill="#fff"/><path d="M5.2 10.6 L9 9.2" stroke="#2d7ff5" stroke-width="0.8"/></svg>
<div class="abs" style="left:534.80px;top:495.30px;width:19.2px;height:19px;background:#2d7ff5;border-radius:3.5px;border:1px solid #fff;box-shadow:0 2px 5px rgba(45,127,245,0.25)"></div>
<svg class="abs" style="left:534.80px;top:495.30px" width="19" height="19" viewBox="0 0 19 19"><rect x="5" y="5.2" width="9.6" height="8.6" rx="2" fill="none" stroke="#fff" stroke-width="1.2"/><path d="M8.2 7.3 L11.4 9.5 L8.2 11.7 Z" fill="none" stroke="#fff" stroke-width="1"/></svg>
<div class="abs" style="left:628.40px;top:486.38px;font-size:11.3px;line-height:15px;color:#333;font-weight:normal;white-space:nowrap;">15,778</div>
<div class="abs" style="left:628.40px;top:506.68px;font-size:11.3px;line-height:15px;color:#333;font-weight:normal;white-space:nowrap;">($993,856.22)</div>
<svg class="abs" style="left:742.20px;top:498.50px" width="7" height="11" viewBox="0 0 7 11"><path d="M3.2 10.4 L3.2 1.2 M0.6 3.8 L3.2 1.0 L5.8 3.8" fill="none" stroke="#f5222d" stroke-width="1.3"/></svg>
<div class="abs" style="left:755.80px;top:496.48px;font-size:11.3px;line-height:15px;color:#333;font-weight:normal;white-space:nowrap;">213.37%</div>
<div class="abs" style="left:851.80px;top:477.58px;font-size:11.3px;line-height:15px;color:#333;font-weight:normal;white-space:nowrap;">4,472</div>
<div class="abs" style="left:851.80px;top:497.08px;font-size:11.3px;line-height:15px;color:#999;font-weight:normal;white-space:nowrap;">($281,691.</div>
<div class="abs" style="left:851.80px;top:516.08px;font-size:11.3px;line-height:15px;color:#999;font-weight:normal;white-space:nowrap;">28)</div>
<svg class="abs" style="left:930.60px;top:498.50px" width="7" height="11" viewBox="0 0 7 11"><path d="M3.2 0 L3.2 9.2 M0.6 6.6 L3.2 9.4 L5.8 6.6" fill="none" stroke="#1faa1f" stroke-width="1.3"/></svg>
<div class="abs" style="left:944.50px;top:496.48px;font-size:11.3px;line-height:15px;color:#333;font-weight:normal;white-space:nowrap;">8.10%</div>
<div class="abs" style="left:1019.50px;top:486.78px;font-size:11.3px;line-height:15px;color:#333;font-weight:normal;white-space:nowrap;">32,244</div>
<div class="abs" style="left:1019.50px;top:503.58px;font-size:11.3px;line-height:15px;color:#333;font-weight:normal;white-space:nowrap;">($2,031,049.56)</div>
<div class="abs" style="left:1130.80px;top:486.78px;font-size:11.3px;line-height:15px;color:#333;font-weight:normal;white-space:nowrap;">$62.99</div>
<div class="abs" style="left:1130.80px;top:503.58px;font-size:11.3px;line-height:15px;color:#333;font-weight:normal;white-space:nowrap;">($99.99)</div>
<div class="abs" style="left:1242.70px;top:496.08px;font-size:11.3px;line-height:15px;color:#333;font-weight:normal;white-space:nowrap;">in Car Video Players</div>
<div class="abs" style="left:1391.90px;top:496.50px;width:41.5px;height:16px;overflow:hidden;"><div style="position:absolute;left:0;top:0;font-size:11.3px;line-height:15px;color:#333;white-space:nowrap">LAMTTO</div></div>
<div class="abs" style="left:170.20px;top:565.75px;width:13px;height:13.3px;border:1.5px solid #3d84f5;border-radius:2.5px;background:#fff"></div>
<svg class="abs" style="left:208.50px;top:551.00px" width="37" height="37" viewBox="0 0 37 37"><defs><clipPath id="pc3"><circle cx="18.5" cy="18.5" r="18.5"/></clipPath></defs><g clip-path="url(#pc3)"><rect width="37" height="37" fill="#fff"/>
<path d="M3 14 L7 5 L10 14 L9 34 L4 34 Z" fill="#e8c9b0"/>
<path d="M10 13 L14 6 L17 13 L16 34 L11 34 Z" fill="#f0d8c4"/>
<path d="M5 10 L8.5 10 L8 14 L5.5 14 Z" fill="#b88a6a"/>
<path d="M12 10 L15.5 10 L15 14 L12.5 14 Z" fill="#c89a7a"/>
<rect x="18" y="12" width="1" height="18" fill="#d5d5d5"/>
<rect x="22" y="2" width="14" height="14" fill="#f3e2d6"/>
<path d="M25 8 C27 6 30 6 33 8" stroke="#6a4a3a" stroke-width="1.2" fill="none"/>
<rect x="22" y="18" width="14" height="14" fill="#e9c7b2"/>
<ellipse cx="29" cy="25" rx="4" ry="1.5" fill="#b07060"/></g></svg>
<div class="abs" style="left:255.00px;top:554.48px;font-size:11.3px;line-height:15px;color:#333;font-weight:normal;white-space:nowrap;">2 in 1 facial &amp; eyebrow hair trimmer,Electric Eyebr...</div>
<div class="abs" style="left:255.00px;top:572.50px;width:16.4px;height:16.4px;background:#2d7ff5;border-radius:3px"></div>
<svg class="abs" style="left:255.00px;top:572.50px" width="16" height="16" viewBox="0 0 16 16"><path d="M3.8 5.2 L6 5.2 L6 12.8 L3.8 12.8 Z" fill="#fff" opacity="0.85"/><path d="M6.4 3 L11 3 L13.2 5.2 L13.2 12.8 L6.4 12.8 Z" fill="#fff"/><path d="M11 3 L11 5.2 L13.2 5.2" fill="#cfe0fb"/></svg>
<div class="abs" style="left:276.50px;top:572.50px;width:16.4px;height:16.4px;background:#2d7ff5;border-radius:3px"></div>
<svg class="abs" style="left:276.50px;top:572.50px" width="16" height="16" viewBox="0 0 16 16"><rect x="6.4" y="3" width="7" height="7.6" rx="1.3" fill="none" stroke="#fff" stroke-width="1.3"/><rect x="3.9" y="5.6" width="6.4" height="7.4" rx="1.3" fill="#2d7ff5" stroke="#fff" stroke-width="1.3"/><path d="M8.2 6.2 L8.2 9 L10.6 9" fill="none" stroke="#fff" stroke-width="1.4"/></svg>
<div class="abs" style="left:298.00px;top:572.50px;width:16.4px;height:16.4px;background:#2d7ff5;border-radius:3px"></div>
<svg class="abs" style="left:298.00px;top:572.50px" width="16" height="16" viewBox="0 0 16 16"><path d="M8.3 3.6 L10.2 3.6 C10.4 5 11.3 5.9 12.8 6 L12.8 7.8 C11.8 7.8 10.9 7.5 10.2 7 L10.2 10.2 C10.2 12.1 8.8 13.2 7.1 13.2 C5.3 13.2 4 11.9 4 10.3 C4 8.5 5.5 7.2 7.5 7.4 L7.5 9.2 C6.5 9 5.8 9.6 5.8 10.3 C5.8 11.1 6.4 11.5 7.1 11.5 C7.9 11.5 8.3 11 8.3 10.1 Z" fill="#fff"/></svg>
<div class="abs" style="left:319.50px;top:572.50px;width:16.4px;height:16.4px;background:#2d7ff5;border-radius:3px"></div>
<svg class="abs" style="left:319.50px;top:572.50px" width="16" height="16" viewBox="0 0 16 16"><path d="M8.4 12.4 L4.4 8.4 C3 7 3.2 4.9 4.8 4.2 C6.2 3.6 7.6 4.1 8.4 5.3 C9.2 4.1 10.6 3.6 12 4.2 C13.6 4.9 13.8 7 12.4 8.4 Z" fill="none" stroke="#fff" stroke-width="1.5" stroke-linejoin="round"/></svg>
<div class="abs" style="left:341.00px;top:572.50px;width:16.4px;height:16.4px;background:#2d7ff5;border-radius:3px"></div>
<svg class="abs" style="left:341.00px;top:572.50px" width="16" height="16" viewBox="0 0 16 16"><path d="M4.6 3 L12.2 3 L12.2 4.4 L4.6 4.4 Z" fill="#fff"/><path d="M5.6 5.4 L11.8 5.4 L12.4 8.4 L6.4 8.4 Z" fill="none" stroke="#fff" stroke-width="1.1"/><path d="M3.2 12 C4.6 9.6 6.6 9.2 8.2 10.2 L10.6 9.6 C11.6 9.4 12.6 10 13.2 10.8 L13.2 12 Z" fill="#fff"/><path d="M5.2 10.6 L9 9.2" stroke="#2d7ff5" stroke-width="0.8"/></svg>
<div class="abs" style="left:534.80px;top:563.80px;width:19.2px;height:19px;background:#2d7ff5;border-radius:3.5px;border:1px solid #fff;box-shadow:0 2px 5px rgba(45,127,245,0.25)"></div>
<svg class="abs" style="left:534.80px;top:563.80px" width="19" height="19" viewBox="0 0 19 19"><rect x="5" y="5.2" width="9.6" height="8.6" rx="2" fill="none" stroke="#fff" stroke-width="1.2"/><path d="M8.2 7.3 L11.4 9.5 L8.2 11.7 Z" fill="none" stroke="#fff" stroke-width="1"/></svg>
<div class="abs" style="left:628.40px;top:554.88px;font-size:11.3px;line-height:15px;color:#333;font-weight:normal;white-space:nowrap;">10,767</div>
<div class="abs" style="left:628.40px;top:575.18px;font-size:11.3px;line-height:15px;color:#333;font-weight:normal;white-space:nowrap;">($150,630.33)</div>
<svg class="abs" style="left:742.20px;top:567.00px" width="7" height="11" viewBox="0 0 7 11"><path d="M3.2 10.4 L3.2 1.2 M0.6 3.8 L3.2 1.0 L5.8 3.8" fill="none" stroke="#f5222d" stroke-width="1.3"/></svg>
<div class="abs" style="left:755.80px;top:564.98px;font-size:11.3px;line-height:15px;color:#333;font-weight:normal;white-space:nowrap;">140.60%</div>
<div class="abs" style="left:851.80px;top:546.08px;font-size:11.3px;line-height:15px;color:#333;font-weight:normal;white-space:nowrap;">4,627</div>
<div class="abs" style="left:851.80px;top:565.58px;font-size:11.3px;line-height:15px;color:#999;font-weight:normal;white-space:nowrap;">($64,731.7</div>
<div class="abs" style="left:851.80px;top:584.58px;font-size:11.3px;line-height:15px;color:#999;font-weight:normal;white-space:nowrap;">3)</div>
<svg class="abs" style="left:930.60px;top:567.00px" width="7" height="11" viewBox="0 0 7 11"><path d="M3.2 10.4 L3.2 1.2 M0.6 3.8 L3.2 1.0 L5.8 3.8" fill="none" stroke="#f5222d" stroke-width="1.3"/></svg>
<div class="abs" style="left:944.50px;top:564.98px;font-size:11.3px;line-height:15px;color:#333;font-weight:normal;white-space:nowrap;">73.49%</div>
<div class="abs" style="left:1019.50px;top:555.28px;font-size:11.3px;line-height:15px;color:#333;font-weight:normal;white-space:nowrap;">17,096</div>
<div class="abs" style="left:1019.50px;top:572.08px;font-size:11.3px;line-height:15px;color:#333;font-weight:normal;white-space:nowrap;">($239,173.04)</div>
<div class="abs" style="left:1130.80px;top:555.28px;font-size:11.3px;line-height:15px;color:#333;font-weight:normal;white-space:nowrap;">$13.99</div>
<div class="abs" style="left:1130.80px;top:572.08px;font-size:11.3px;line-height:15px;color:#333;font-weight:normal;white-space:nowrap;">($39.90)</div>
<div class="abs" style="left:1242.70px;top:554.18px;font-size:11.3px;line-height:15px;color:#333;font-weight:normal;white-space:nowrap;">in Electric Eyebrow Sha...</div>
<div class="abs" style="left:1242.70px;top:574.58px;font-size:11.3px;line-height:15px;color:#333;font-weight:normal;white-space:nowrap;">in Hair Trimmers &amp; Clip...</div>
<div class="abs" style="left:1391.90px;top:565.00px;width:41.5px;height:16px;overflow:hidden;"><div style="position:absolute;left:0;top:0;font-size:11.3px;line-height:15px;color:#333;white-space:nowrap">PRI Beauty</div></div>
<div class="abs" style="left:170.20px;top:634.25px;width:13px;height:13.3px;border:1.5px solid #3d84f5;border-radius:2.5px;background:#fff"></div>
<svg class="abs" style="left:208.50px;top:619.50px" width="37" height="37" viewBox="0 0 37 37"><defs><clipPath id="pc4"><circle cx="18.5" cy="18.5" r="18.5"/></clipPath></defs><g clip-path="url(#pc4)"><rect width="37" height="37" fill="#fff"/>
<circle cx="12" cy="18" r="10.5" fill="none" stroke="#333" stroke-width="1.6"/>
<circle cx="12" cy="18" r="8.5" fill="none" stroke="#888" stroke-width="0.9"/>
<path d="M8 12 L18 9 L21 19 L12 23 Z" fill="#7dd33a"/>
<path d="M18 9 L21 19 L19 22 L16 12 Z" fill="#5aa822"/>
<rect x="24" y="4" width="2" height="2" fill="#4caf50"/><rect x="27" y="5" width="6" height="2" fill="#666"/>
<rect x="23" y="10" width="11" height="5" fill="#eee" stroke="#ccc" stroke-width="0.5"/>
<rect x="24" y="11" width="2" height="2" fill="#e53935"/><rect x="27" y="11" width="2" height="2" fill="#43a047"/><rect x="30" y="11" width="2" height="2" fill="#1e88e5"/>
<path d="M22 24 L30 22 L31 30 L23 32 Z" fill="#86d640"/>
<path d="M22 24 L25 20 L31 21 L30 22 Z" fill="#444"/></g></svg>
<div class="abs" style="left:255.00px;top:622.98px;font-size:11.3px;line-height:15px;color:#333;font-weight:normal;white-space:nowrap;">W&amp;O 2pcs 4-in-1 Fast Charging Adapter Compati...</div>
<div class="abs" style="left:255.00px;top:641.00px;width:16.4px;height:16.4px;background:#2d7ff5;border-radius:3px"></div>
<svg class="abs" style="left:255.00px;top:641.00px" width="16" height="16" viewBox="0 0 16 16"><path d="M3.8 5.2 L6 5.2 L6 12.8 L3.8 12.8 Z" fill="#fff" opacity="0.85"/><path d="M6.4 3 L11 3 L13.2 5.2 L13.2 12.8 L6.4 12.8 Z" fill="#fff"/><path d="M11 3 L11 5.2 L13.2 5.2" fill="#cfe0fb"/></svg>
<div class="abs" style="left:276.50px;top:641.00px;width:16.4px;height:16.4px;background:#2d7ff5;border-radius:3px"></div>
<svg class="abs" style="left:276.50px;top:641.00px" width="16" height="16" viewBox="0 0 16 16"><rect x="6.4" y="3" width="7" height="7.6" rx="1.3" fill="none" stroke="#fff" stroke-width="1.3"/><rect x="3.9" y="5.6" width="6.4" height="7.4" rx="1.3" fill="#2d7ff5" stroke="#fff" stroke-width="1.3"/><path d="M8.2 6.2 L8.2 9 L10.6 9" fill="none" stroke="#fff" stroke-width="1.4"/></svg>
<div class="abs" style="left:298.00px;top:641.00px;width:16.4px;height:16.4px;background:#2d7ff5;border-radius:3px"></div>
<svg class="abs" style="left:298.00px;top:641.00px" width="16" height="16" viewBox="0 0 16 16"><path d="M8.3 3.6 L10.2 3.6 C10.4 5 11.3 5.9 12.8 6 L12.8 7.8 C11.8 7.8 10.9 7.5 10.2 7 L10.2 10.2 C10.2 12.1 8.8 13.2 7.1 13.2 C5.3 13.2 4 11.9 4 10.3 C4 8.5 5.5 7.2 7.5 7.4 L7.5 9.2 C6.5 9 5.8 9.6 5.8 10.3 C5.8 11.1 6.4 11.5 7.1 11.5 C7.9 11.5 8.3 11 8.3 10.1 Z" fill="#fff"/></svg>
<div class="abs" style="left:319.50px;top:641.00px;width:16.4px;height:16.4px;background:#2d7ff5;border-radius:3px"></div>
<svg class="abs" style="left:319.50px;top:641.00px" width="16" height="16" viewBox="0 0 16 16"><path d="M8.4 12.4 L4.4 8.4 C3 7 3.2 4.9 4.8 4.2 C6.2 3.6 7.6 4.1 8.4 5.3 C9.2 4.1 10.6 3.6 12 4.2 C13.6 4.9 13.8 7 12.4 8.4 Z" fill="none" stroke="#fff" stroke-width="1.5" stroke-linejoin="round"/></svg>
<div class="abs" style="left:341.00px;top:641.00px;width:16.4px;height:16.4px;background:#2d7ff5;border-radius:3px"></div>
<svg class="abs" style="left:341.00px;top:641.00px" width="16" height="16" viewBox="0 0 16 16"><path d="M4.6 3 L12.2 3 L12.2 4.4 L4.6 4.4 Z" fill="#fff"/><path d="M5.6 5.4 L11.8 5.4 L12.4 8.4 L6.4 8.4 Z" fill="none" stroke="#fff" stroke-width="1.1"/><path d="M3.2 12 C4.6 9.6 6.6 9.2 8.2 10.2 L10.6 9.6 C11.6 9.4 12.6 10 13.2 10.8 L13.2 12 Z" fill="#fff"/><path d="M5.2 10.6 L9 9.2" stroke="#2d7ff5" stroke-width="0.8"/></svg>
<div class="abs" style="left:534.80px;top:632.30px;width:19.2px;height:19px;background:#2d7ff5;border-radius:3.5px;border:1px solid #fff;box-shadow:0 2px 5px rgba(45,127,245,0.25)"></div>
<svg class="abs" style="left:534.80px;top:632.30px" width="19" height="19" viewBox="0 0 19 19"><rect x="5" y="5.2" width="9.6" height="8.6" rx="2" fill="none" stroke="#fff" stroke-width="1.2"/><path d="M8.2 7.3 L11.4 9.5 L8.2 11.7 Z" fill="none" stroke="#fff" stroke-width="1"/></svg>
<div class="abs" style="left:628.40px;top:623.38px;font-size:11.3px;line-height:15px;color:#333;font-weight:normal;white-space:nowrap;">10,439</div>
<div class="abs" style="left:628.40px;top:643.68px;font-size:11.3px;line-height:15px;color:#333;font-weight:normal;white-space:nowrap;">($135,602.61)</div>
<svg class="abs" style="left:742.20px;top:635.50px" width="7" height="11" viewBox="0 0 7 11"><path d="M3.2 10.4 L3.2 1.2 M0.6 3.8 L3.2 1.0 L5.8 3.8" fill="none" stroke="#f5222d" stroke-width="1.3"/></svg>
<div class="abs" style="left:755.80px;top:633.48px;font-size:11.3px;line-height:15px;color:#333;font-weight:normal;white-space:nowrap;">31.01%</div>
<div class="abs" style="left:851.80px;top:614.58px;font-size:11.3px;line-height:15px;color:#333;font-weight:normal;white-space:nowrap;">1,198</div>
<div class="abs" style="left:851.80px;top:634.08px;font-size:11.3px;line-height:15px;color:#999;font-weight:normal;white-space:nowrap;">($15,562.0</div>
<div class="abs" style="left:851.80px;top:653.08px;font-size:11.3px;line-height:15px;color:#999;font-weight:normal;white-space:nowrap;">2)</div>
<svg class="abs" style="left:930.60px;top:635.50px" width="7" height="11" viewBox="0 0 7 11"><path d="M3.2 0 L3.2 9.2 M0.6 6.6 L3.2 9.4 L5.8 6.6" fill="none" stroke="#1faa1f" stroke-width="1.3"/></svg>
<div class="abs" style="left:944.50px;top:633.48px;font-size:11.3px;line-height:15px;color:#333;font-weight:normal;white-space:nowrap;">23.50%</div>
<div class="abs" style="left:1019.50px;top:623.78px;font-size:11.3px;line-height:15px;color:#333;font-weight:normal;white-space:nowrap;">16,348</div>
<div class="abs" style="left:1019.50px;top:640.58px;font-size:11.3px;line-height:15px;color:#333;font-weight:normal;white-space:nowrap;">($212,360.52)</div>
<div class="abs" style="left:1130.80px;top:623.78px;font-size:11.3px;line-height:15px;color:#333;font-weight:normal;white-space:nowrap;">$12.99</div>
<div class="abs" style="left:1130.80px;top:640.58px;font-size:11.3px;line-height:15px;color:#333;font-weight:normal;white-space:nowrap;">($49.99)</div>
<div class="abs" style="left:1242.70px;top:633.08px;font-size:11.3px;line-height:15px;color:#333;font-weight:normal;white-space:nowrap;">in Cables, Chargers &amp; ...</div>
<div class="abs" style="left:1391.90px;top:633.50px;width:41.5px;height:16px;overflow:hidden;"><div style="position:absolute;left:0;top:0;font-size:11.3px;line-height:15px;color:#333;white-space:nowrap">TenYI Direct</div></div>
<div class="abs" style="left:170.20px;top:702.75px;width:13px;height:13.3px;border:1.5px solid #3d84f5;border-radius:2.5px;background:#fff"></div>
<svg class="abs" style="left:208.50px;top:688.00px" width="37" height="37" viewBox="0 0 37 37"><defs><clipPath id="pc5"><circle cx="18.5" cy="18.5" r="18.5"/></clipPath></defs><g clip-path="url(#pc5)"><rect width="37" height="37" fill="#fff"/>
<rect x="2" y="9" width="11" height="21" fill="#c6dc2a"/>
<rect x="3.5" y="11" width="4" height="17" fill="#1f3c78"/>
<rect x="8" y="12" width="3" height="4" fill="#333"/>
<rect x="16" y="6" width="3" height="26" fill="#2a2a2a"/>
<rect x="15.5" y="6" width="4" height="4" fill="#b7c92a"/>
<rect x="21" y="25" width="6" height="5" fill="#333"/>
<path d="M30 8 L30 30 M32 10 L32 28" stroke="#555" stroke-width="0.9"/>
<rect x="29" y="26" width="4" height="4" fill="#666"/></g></svg>
<div class="abs" style="left:255.00px;top:691.48px;font-size:11.3px;line-height:15px;color:#333;font-weight:normal;white-space:nowrap;">Philips Norelco OneBlade 360 Face, Electric Trim...</div>
<div class="abs" style="left:255.00px;top:709.50px;width:16.4px;height:16.4px;background:#2d7ff5;border-radius:3px"></div>
<svg class="abs" style="left:255.00px;top:709.50px" width="16" height="16" viewBox="0 0 16 16"><path d="M3.8 5.2 L6 5.2 L6 12.8 L3.8 12.8 Z" fill="#fff" opacity="0.85"/><path d="M6.4 3 L11 3 L13.2 5.2 L13.2 12.8 L6.4 12.8 Z" fill="#fff"/><path d="M11 3 L11 5.2 L13.2 5.2" fill="#cfe0fb"/></svg>
<div class="abs" style="left:276.50px;top:709.50px;width:16.4px;height:16.4px;background:#2d7ff5;border-radius:3px"></div>
<svg class="abs" style="left:276.50px;top:709.50px" width="16" height="16" viewBox="0 0 16 16"><rect x="6.4" y="3" width="7" height="7.6" rx="1.3" fill="none" stroke="#fff" stroke-width="1.3"/><rect x="3.9" y="5.6" width="6.4" height="7.4" rx="1.3" fill="#2d7ff5" stroke="#fff" stroke-width="1.3"/><path d="M8.2 6.2 L8.2 9 L10.6 9" fill="none" stroke="#fff" stroke-width="1.4"/></svg>
<div class="abs" style="left:298.00px;top:709.50px;width:16.4px;height:16.4px;background:#2d7ff5;border-radius:3px"></div>
<svg class="abs" style="left:298.00px;top:709.50px" width="16" height="16" viewBox="0 0 16 16"><path d="M8.3 3.6 L10.2 3.6 C10.4 5 11.3 5.9 12.8 6 L12.8 7.8 C11.8 7.8 10.9 7.5 10.2 7 L10.2 10.2 C10.2 12.1 8.8 13.2 7.1 13.2 C5.3 13.2 4 11.9 4 10.3 C4 8.5 5.5 7.2 7.5 7.4 L7.5 9.2 C6.5 9 5.8 9.6 5.8 10.3 C5.8 11.1 6.4 11.5 7.1 11.5 C7.9 11.5 8.3 11 8.3 10.1 Z" fill="#fff"/></svg>
<div class="abs" style="left:319.50px;top:709.50px;width:16.4px;height:16.4px;background:#2d7ff5;border-radius:3px"></div>
<svg class="abs" style="left:319.50px;top:709.50px" width="16" height="16" viewBox="0 0 16 16"><path d="M8.4 12.4 L4.4 8.4 C3 7 3.2 4.9 4.8 4.2 C6.2 3.6 7.6 4.1 8.4 5.3 C9.2 4.1 10.6 3.6 12 4.2 C13.6 4.9 13.8 7 12.4 8.4 Z" fill="none" stroke="#fff" stroke-width="1.5" stroke-linejoin="round"/></svg>
<div class="abs" style="left:341.00px;top:709.50px;width:16.4px;height:16.4px;background:#2d7ff5;border-radius:3px"></div>
<svg class="abs" style="left:341.00px;top:709.50px" width="16" height="16" viewBox="0 0 16 16"><path d="M4.6 3 L12.2 3 L12.2 4.4 L4.6 4.4 Z" fill="#fff"/><path d="M5.6 5.4 L11.8 5.4 L12.4 8.4 L6.4 8.4 Z" fill="none" stroke="#fff" stroke-width="1.1"/><path d="M3.2 12 C4.6 9.6 6.6 9.2 8.2 10.2 L10.6 9.6 C11.6 9.4 12.6 10 13.2 10.8 L13.2 12 Z" fill="#fff"/><path d="M5.2 10.6 L9 9.2" stroke="#2d7ff5" stroke-width="0.8"/></svg>
<div class="abs" style="left:534.80px;top:700.80px;width:19.2px;height:19px;background:#2d7ff5;border-radius:3.5px;border:1px solid #fff;box-shadow:0 2px 5px rgba(45,127,245,0.25)"></div>
<svg class="abs" style="left:534.80px;top:700.80px" width="19" height="19" viewBox="0 0 19 19"><rect x="5" y="5.2" width="9.6" height="8.6" rx="2" fill="none" stroke="#fff" stroke-width="1.2"/><path d="M8.2 7.3 L11.4 9.5 L8.2 11.7 Z" fill="none" stroke="#fff" stroke-width="1"/></svg>
<div class="abs" style="left:628.40px;top:691.88px;font-size:11.3px;line-height:15px;color:#333;font-weight:normal;white-space:nowrap;">10,334</div>
<div class="abs" style="left:628.40px;top:712.18px;font-size:11.3px;line-height:15px;color:#333;font-weight:normal;white-space:nowrap;">($309,606.64)</div>
<svg class="abs" style="left:742.20px;top:704.00px" width="7" height="11" viewBox="0 0 7 11"><path d="M3.2 10.4 L3.2 1.2 M0.6 3.8 L3.2 1.0 L5.8 3.8" fill="none" stroke="#f5222d" stroke-width="1.3"/></svg>
<div class="abs" style="left:755.80px;top:701.98px;font-size:11.3px;line-height:15px;color:#333;font-weight:normal;white-space:nowrap;">11.15%</div>
<div class="abs" style="left:851.80px;top:683.08px;font-size:11.3px;line-height:15px;color:#333;font-weight:normal;white-space:nowrap;">2,362</div>
<div class="abs" style="left:851.80px;top:702.58px;font-size:11.3px;line-height:15px;color:#999;font-weight:normal;white-space:nowrap;">($70,765.5</div>
<div class="abs" style="left:851.80px;top:721.58px;font-size:11.3px;line-height:15px;color:#999;font-weight:normal;white-space:nowrap;">2)</div>
<svg class="abs" style="left:930.60px;top:704.00px" width="7" height="11" viewBox="0 0 7 11"><path d="M3.2 0 L3.2 9.2 M0.6 6.6 L3.2 9.4 L5.8 6.6" fill="none" stroke="#1faa1f" stroke-width="1.3"/></svg>
<div class="abs" style="left:944.50px;top:701.98px;font-size:11.3px;line-height:15px;color:#333;font-weight:normal;white-space:nowrap;">33.18%</div>
<div class="abs" style="left:1019.50px;top:692.28px;font-size:11.3px;line-height:15px;color:#333;font-weight:normal;white-space:nowrap;">73,806</div>
<div class="abs" style="left:1019.50px;top:709.08px;font-size:11.3px;line-height:15px;color:#333;font-weight:normal;white-space:nowrap;">($2,211,227.76)</div>
<div class="abs" style="left:1130.80px;top:692.28px;font-size:11.3px;line-height:15px;color:#333;font-weight:normal;white-space:nowrap;">$29.96</div>
<div class="abs" style="left:1130.80px;top:709.08px;font-size:11.3px;line-height:15px;color:#333;font-weight:normal;white-space:nowrap;">($37.96)</div>
<div class="abs" style="left:1242.70px;top:691.18px;font-size:11.3px;line-height:15px;color:#333;font-weight:normal;white-space:nowrap;">in Personal Care Applia...</div>
<div class="abs" style="left:1242.70px;top:711.58px;font-size:11.3px;line-height:15px;color:#333;font-weight:normal;white-space:nowrap;">in Electric Shavers</div>
<div class="abs" style="left:1391.90px;top:702.00px;width:41.5px;height:16px;overflow:hidden;"><div style="position:absolute;left:0;top:0;font-size:11.3px;line-height:15px;color:#333;white-space:nowrap">Philips Store</div></div>
<div class="abs" style="left:170.20px;top:771.25px;width:13px;height:13.3px;border:1.5px solid #3d84f5;border-radius:2.5px;background:#fff"></div>
<svg class="abs" style="left:208.50px;top:756.50px" width="37" height="37" viewBox="0 0 37 37"><defs><clipPath id="pc6"><circle cx="18.5" cy="18.5" r="18.5"/></clipPath></defs><g clip-path="url(#pc6)"><rect width="37" height="37" fill="#fff"/>
<path d="M8 14 C10 10 18 8 26 9 C29 10 30 13 28.5 17 L27 22 C26 24 23 25 20 25 L13 24 C10 23 8 20 8 14 Z" fill="#1f2a24"/>
<path d="M8 17 L6 21 L10 24 L12 23 Z" fill="#161616"/>
<rect x="18" y="12" width="4" height="1" fill="#3dd07a"/><rect x="17" y="15" width="6" height="1.2" fill="#2fbf6a"/>
<path d="M10 24 C14 27 22 28 27 23" stroke="#e5e5e5" stroke-width="1" fill="none"/></g></svg>
<div class="abs" style="left:255.00px;top:759.98px;font-size:11.3px;line-height:15px;color:#333;font-weight:normal;white-space:nowrap;">Wrist blood pressure monitor, rechargeable blood ...</div>
<div class="abs" style="left:255.00px;top:778.00px;width:16.4px;height:16.4px;background:#2d7ff5;border-radius:3px"></div>
<svg class="abs" style="left:255.00px;top:778.00px" width="16" height="16" viewBox="0 0 16 16"><path d="M3.8 5.2 L6 5.2 L6 12.8 L3.8 12.8 Z" fill="#fff" opacity="0.85"/><path d="M6.4 3 L11 3 L13.2 5.2 L13.2 12.8 L6.4 12.8 Z" fill="#fff"/><path d="M11 3 L11 5.2 L13.2 5.2" fill="#cfe0fb"/></svg>
<div class="abs" style="left:276.50px;top:778.00px;width:16.4px;height:16.4px;background:#2d7ff5;border-radius:3px"></div>
<svg class="abs" style="left:276.50px;top:778.00px" width="16" height="16" viewBox="0 0 16 16"><rect x="6.4" y="3" width="7" height="7.6" rx="1.3" fill="none" stroke="#fff" stroke-width="1.3"/><rect x="3.9" y="5.6" width="6.4" height="7.4" rx="1.3" fill="#2d7ff5" stroke="#fff" stroke-width="1.3"/><path d="M8.2 6.2 L8.2 9 L10.6 9" fill="none" stroke="#fff" stroke-width="1.4"/></svg>
<div class="abs" style="left:298.00px;top:778.00px;width:16.4px;height:16.4px;background:#2d7ff5;border-radius:3px"></div>
<svg class="abs" style="left:298.00px;top:778.00px" width="16" height="16" viewBox="0 0 16 16"><path d="M8.3 3.6 L10.2 3.6 C10.4 5 11.3 5.9 12.8 6 L12.8 7.8 C11.8 7.8 10.9 7.5 10.2 7 L10.2 10.2 C10.2 12.1 8.8 13.2 7.1 13.2 C5.3 13.2 4 11.9 4 10.3 C4 8.5 5.5 7.2 7.5 7.4 L7.5 9.2 C6.5 9 5.8 9.6 5.8 10.3 C5.8 11.1 6.4 11.5 7.1 11.5 C7.9 11.5 8.3 11 8.3 10.1 Z" fill="#fff"/></svg>
<div class="abs" style="left:319.50px;top:778.00px;width:16.4px;height:16.4px;background:#2d7ff5;border-radius:3px"></div>
<svg class="abs" style="left:319.50px;top:778.00px" width="16" height="16" viewBox="0 0 16 16"><path d="M8.4 12.4 L4.4 8.4 C3 7 3.2 4.9 4.8 4.2 C6.2 3.6 7.6 4.1 8.4 5.3 C9.2 4.1 10.6 3.6 12 4.2 C13.6 4.9 13.8 7 12.4 8.4 Z" fill="none" stroke="#fff" stroke-width="1.5" stroke-linejoin="round"/></svg>
<div class="abs" style="left:341.00px;top:778.00px;width:16.4px;height:16.4px;background:#2d7ff5;border-radius:3px"></div>
<svg class="abs" style="left:341.00px;top:778.00px" width="16" height="16" viewBox="0 0 16 16"><path d="M4.6 3 L12.2 3 L12.2 4.4 L4.6 4.4 Z" fill="#fff"/><path d="M5.6 5.4 L11.8 5.4 L12.4 8.4 L6.4 8.4 Z" fill="none" stroke="#fff" stroke-width="1.1"/><path d="M3.2 12 C4.6 9.6 6.6 9.2 8.2 10.2 L10.6 9.6 C11.6 9.4 12.6 10 13.2 10.8 L13.2 12 Z" fill="#fff"/><path d="M5.2 10.6 L9 9.2" stroke="#2d7ff5" stroke-width="0.8"/></svg>
<div class="abs" style="left:534.80px;top:769.30px;width:19.2px;height:19px;background:#2d7ff5;border-radius:3.5px;border:1px solid #fff;box-shadow:0 2px 5px rgba(45,127,245,0.25)"></div>
<svg class="abs" style="left:534.80px;top:769.30px" width="19" height="19" viewBox="0 0 19 19"><rect x="5" y="5.2" width="9.6" height="8.6" rx="2" fill="none" stroke="#fff" stroke-width="1.2"/><path d="M8.2 7.3 L11.4 9.5 L8.2 11.7 Z" fill="none" stroke="#fff" stroke-width="1"/></svg>
<div class="abs" style="left:628.40px;top:760.38px;font-size:11.3px;line-height:15px;color:#333;font-weight:normal;white-space:nowrap;">9,034</div>
<div class="abs" style="left:628.40px;top:780.68px;font-size:11.3px;line-height:15px;color:#333;font-weight:normal;white-space:nowrap;">($117,351.66)</div>
<svg class="abs" style="left:742.20px;top:772.50px" width="7" height="11" viewBox="0 0 7 11"><path d="M3.2 10.4 L3.2 1.2 M0.6 3.8 L3.2 1.0 L5.8 3.8" fill="none" stroke="#f5222d" stroke-width="1.3"/></svg>
<div class="abs" style="left:755.80px;top:770.48px;font-size:11.3px;line-height:15px;color:#333;font-weight:normal;white-space:nowrap;">103.84%</div>
<div class="abs" style="left:851.80px;top:751.58px;font-size:11.3px;line-height:15px;color:#333;font-weight:normal;white-space:nowrap;">4,038</div>
<div class="abs" style="left:851.80px;top:771.08px;font-size:11.3px;line-height:15px;color:#999;font-weight:normal;white-space:nowrap;">($52,453.6</div>
<div class="abs" style="left:851.80px;top:790.08px;font-size:11.3px;line-height:15px;color:#999;font-weight:normal;white-space:nowrap;">2)</div>
<svg class="abs" style="left:930.60px;top:772.50px" width="7" height="11" viewBox="0 0 7 11"><path d="M3.2 10.4 L3.2 1.2 M0.6 3.8 L3.2 1.0 L5.8 3.8" fill="none" stroke="#f5222d" stroke-width="1.3"/></svg>
<div class="abs" style="left:944.50px;top:770.48px;font-size:11.3px;line-height:15px;color:#333;font-weight:normal;white-space:nowrap;">52.15%</div>
<div class="abs" style="left:1019.50px;top:760.78px;font-size:11.3px;line-height:15px;color:#333;font-weight:normal;white-space:nowrap;">30,189</div>
<div class="abs" style="left:1019.50px;top:777.58px;font-size:11.3px;line-height:15px;color:#333;font-weight:normal;white-space:nowrap;">($392,155.11)</div>
<div class="abs" style="left:1130.80px;top:760.78px;font-size:11.3px;line-height:15px;color:#333;font-weight:normal;white-space:nowrap;">$12.99</div>
<div class="abs" style="left:1130.80px;top:777.58px;font-size:11.3px;line-height:15px;color:#333;font-weight:normal;white-space:nowrap;">($20.98)</div>
<div class="abs" style="left:1242.70px;top:770.08px;font-size:11.3px;line-height:15px;color:#333;font-weight:normal;white-space:nowrap;">in Health Monitors &amp; Te...</div>
<div class="abs" style="left:1391.90px;top:770.50px;width:41.5px;height:16px;overflow:hidden;"><div style="position:absolute;left:0;top:0;font-size:11.3px;line-height:15px;color:#333;white-space:nowrap">Moyleaf</div></div>
<div class="abs" style="left:170.20px;top:839.75px;width:13px;height:13.3px;border:1.5px solid #3d84f5;border-radius:2.5px;background:#fff"></div>
<svg class="abs" style="left:208.50px;top:825.00px" width="37" height="37" viewBox="0 0 37 37"><defs><clipPath id="pc7"><circle cx="18.5" cy="18.5" r="18.5"/></clipPath></defs><g clip-path="url(#pc7)"><rect width="37" height="37" fill="#fff"/>
<rect x="2" y="4" width="14.5" height="28" rx="7" fill="#1b1b1b"/>
<rect x="20.5" y="4" width="14.5" height="28" rx="7" fill="#1b1b1b"/>
<circle cx="9.2" cy="8.5" r="1.8" fill="#f08a3c"/><circle cx="27.8" cy="8.5" r="1.8" fill="#f08a3c"/>
<rect x="4" y="10" width="2" height="18" fill="#333" opacity="0.7"/><rect x="22.5" y="10" width="2" height="18" fill="#333" opacity="0.7"/></g></svg>
<div class="abs" style="left:255.00px;top:828.48px;font-size:11.3px;line-height:15px;color:#333;font-weight:normal;white-space:nowrap;">Fulog 2 Pack Magnetic Hand Warmers, 12H Long...</div>
<div class="abs" style="left:255.00px;top:846.50px;width:16.4px;height:16.4px;background:#2d7ff5;border-radius:3px"></div>
<svg class="abs" style="left:255.00px;top:846.50px" width="16" height="16" viewBox="0 0 16 16"><path d="M3.8 5.2 L6 5.2 L6 12.8 L3.8 12.8 Z" fill="#fff" opacity="0.85"/><path d="M6.4 3 L11 3 L13.2 5.2 L13.2 12.8 L6.4 12.8 Z" fill="#fff"/><path d="M11 3 L11 5.2 L13.2 5.2" fill="#cfe0fb"/></svg>
<div class="abs" style="left:276.50px;top:846.50px;width:16.4px;height:16.4px;background:#2d7ff5;border-radius:3px"></div>
<svg class="abs" style="left:276.50px;top:846.50px" width="16" height="16" viewBox="0 0 16 16"><rect x="6.4" y="3" width="7" height="7.6" rx="1.3" fill="none" stroke="#fff" stroke-width="1.3"/><rect x="3.9" y="5.6" width="6.4" height="7.4" rx="1.3" fill="#2d7ff5" stroke="#fff" stroke-width="1.3"/><path d="M8.2 6.2 L8.2 9 L10.6 9" fill="none" stroke="#fff" stroke-width="1.4"/></svg>
<div class="abs" style="left:298.00px;top:846.50px;width:16.4px;height:16.4px;background:#2d7ff5;border-radius:3px"></div>
<svg class="abs" style="left:298.00px;top:846.50px" width="16" height="16" viewBox="0 0 16 16"><path d="M8.3 3.6 L10.2 3.6 C10.4 5 11.3 5.9 12.8 6 L12.8 7.8 C11.8 7.8 10.9 7.5 10.2 7 L10.2 10.2 C10.2 12.1 8.8 13.2 7.1 13.2 C5.3 13.2 4 11.9 4 10.3 C4 8.5 5.5 7.2 7.5 7.4 L7.5 9.2 C6.5 9 5.8 9.6 5.8 10.3 C5.8 11.1 6.4 11.5 7.1 11.5 C7.9 11.5 8.3 11 8.3 10.1 Z" fill="#fff"/></svg>
<div class="abs" style="left:319.50px;top:846.50px;width:16.4px;height:16.4px;background:#2d7ff5;border-radius:3px"></div>
<svg class="abs" style="left:319.50px;top:846.50px" width="16" height="16" viewBox="0 0 16 16"><path d="M8.4 12.4 L4.4 8.4 C3 7 3.2 4.9 4.8 4.2 C6.2 3.6 7.6 4.1 8.4 5.3 C9.2 4.1 10.6 3.6 12 4.2 C13.6 4.9 13.8 7 12.4 8.4 Z" fill="none" stroke="#fff" stroke-width="1.5" stroke-linejoin="round"/></svg>
<div class="abs" style="left:341.00px;top:846.50px;width:16.4px;height:16.4px;background:#2d7ff5;border-radius:3px"></div>
<svg class="abs" style="left:341.00px;top:846.50px" width="16" height="16" viewBox="0 0 16 16"><path d="M4.6 3 L12.2 3 L12.2 4.4 L4.6 4.4 Z" fill="#fff"/><path d="M5.6 5.4 L11.8 5.4 L12.4 8.4 L6.4 8.4 Z" fill="none" stroke="#fff" stroke-width="1.1"/><path d="M3.2 12 C4.6 9.6 6.6 9.2 8.2 10.2 L10.6 9.6 C11.6 9.4 12.6 10 13.2 10.8 L13.2 12 Z" fill="#fff"/><path d="M5.2 10.6 L9 9.2" stroke="#2d7ff5" stroke-width="0.8"/></svg>
<div class="abs" style="left:534.80px;top:837.80px;width:19.2px;height:19px;background:#2d7ff5;border-radius:3.5px;border:1px solid #fff;box-shadow:0 2px 5px rgba(45,127,245,0.25)"></div>
<svg class="abs" style="left:534.80px;top:837.80px" width="19" height="19" viewBox="0 0 19 19"><rect x="5" y="5.2" width="9.6" height="8.6" rx="2" fill="none" stroke="#fff" stroke-width="1.2"/><path d="M8.2 7.3 L11.4 9.5 L8.2 11.7 Z" fill="none" stroke="#fff" stroke-width="1"/></svg>
<div class="abs" style="left:628.40px;top:828.88px;font-size:11.3px;line-height:15px;color:#333;font-weight:normal;white-space:nowrap;">7,675</div>
<div class="abs" style="left:628.40px;top:849.18px;font-size:11.3px;line-height:15px;color:#333;font-weight:normal;white-space:nowrap;">($145,748.25)</div>
<svg class="abs" style="left:742.20px;top:841.00px" width="7" height="11" viewBox="0 0 7 11"><path d="M3.2 10.4 L3.2 1.2 M0.6 3.8 L3.2 1.0 L5.8 3.8" fill="none" stroke="#f5222d" stroke-width="1.3"/></svg>
<div class="abs" style="left:755.80px;top:838.98px;font-size:11.3px;line-height:15px;color:#333;font-weight:normal;white-space:nowrap;">53.35%</div>
<div class="abs" style="left:851.80px;top:820.08px;font-size:11.3px;line-height:15px;color:#333;font-weight:normal;white-space:nowrap;">1,293</div>
<div class="abs" style="left:851.80px;top:839.58px;font-size:11.3px;line-height:15px;color:#999;font-weight:normal;white-space:nowrap;">($24,554.0</div>
<div class="abs" style="left:851.80px;top:858.58px;font-size:11.3px;line-height:15px;color:#999;font-weight:normal;white-space:nowrap;">7)</div>
<svg class="abs" style="left:930.60px;top:841.00px" width="7" height="11" viewBox="0 0 7 11"><path d="M3.2 0 L3.2 9.2 M0.6 6.6 L3.2 9.4 L5.8 6.6" fill="none" stroke="#1faa1f" stroke-width="1.3"/></svg>
<div class="abs" style="left:944.50px;top:838.98px;font-size:11.3px;line-height:15px;color:#333;font-weight:normal;white-space:nowrap;">40.88%</div>
<div class="abs" style="left:1019.50px;top:829.28px;font-size:11.3px;line-height:15px;color:#333;font-weight:normal;white-space:nowrap;">45,637</div>
<div class="abs" style="left:1019.50px;top:846.08px;font-size:11.3px;line-height:15px;color:#333;font-weight:normal;white-space:nowrap;">($866,646.63)</div>
<div class="abs" style="left:1130.80px;top:829.28px;font-size:11.3px;line-height:15px;color:#333;font-weight:normal;white-space:nowrap;">$18.99</div>
<div class="abs" style="left:1130.80px;top:846.08px;font-size:11.3px;line-height:15px;color:#333;font-weight:normal;white-space:nowrap;">($30.99)</div>
<div class="abs" style="left:1242.70px;top:828.18px;font-size:11.3px;line-height:15px;color:#333;font-weight:normal;white-space:nowrap;">in Hand &amp; Foot Warmers</div>
<div class="abs" style="left:1242.70px;top:848.58px;font-size:11.3px;line-height:15px;color:#333;font-weight:normal;white-space:nowrap;">in Heaters</div>
<div class="abs" style="left:1391.90px;top:839.00px;width:41.5px;height:16px;overflow:hidden;"><div style="position:absolute;left:0;top:0;font-size:11.3px;line-height:15px;color:#333;white-space:nowrap">Fulog The</div></div>
<div class="abs" style="left:170.20px;top:908.25px;width:13px;height:13.3px;border:1.5px solid #3d84f5;border-radius:2.5px;background:#fff"></div>
<svg class="abs" style="left:208.50px;top:893.50px" width="37" height="37" viewBox="0 0 37 37"><defs><clipPath id="pc8"><circle cx="18.5" cy="18.5" r="18.5"/></clipPath></defs><g clip-path="url(#pc8)"><rect width="37" height="37" fill="#fff"/>
<path d="M1 20 C1 8 8 1 18.5 1 C29 1 36 8 36 20" fill="none" stroke="#c31d2a" stroke-width="1.5"/>
<path d="M3 6 L18 10 L28 13 L27 15 L17 12 L4 9 Z" fill="#b8d430"/>
<path d="M25 12 L31 14 L30 27 L24 28 L23 18 Z" fill="#b9d52f"/>
<path d="M26 16 L30 16 L29 26 L25 26 Z" fill="#2b2b2b"/>
<rect x="4" y="14" width="16" height="13" rx="1.5" fill="#2f2f2f"/>
<rect x="5" y="16" width="14" height="1" fill="#444"/>
<ellipse cx="21" cy="28" rx="5" ry="2.5" fill="none" stroke="#222" stroke-width="1.3"/>
<rect x="8" y="31" width="2" height="3" fill="#222"/><rect x="14" y="31" width="4" height="2" fill="#333"/></g></svg>
<div class="abs" style="left:255.00px;top:896.98px;font-size:11.3px;line-height:15px;color:#333;font-weight:normal;white-space:nowrap;">【TikTokShopBlackFriday】SEESE Cordless Pre...</div>
<div class="abs" style="left:255.00px;top:915.00px;width:16.4px;height:16.4px;background:#2d7ff5;border-radius:3px"></div>
<svg class="abs" style="left:255.00px;top:915.00px" width="16" height="16" viewBox="0 0 16 16"><path d="M3.8 5.2 L6 5.2 L6 12.8 L3.8 12.8 Z" fill="#fff" opacity="0.85"/><path d="M6.4 3 L11 3 L13.2 5.2 L13.2 12.8 L6.4 12.8 Z" fill="#fff"/><path d="M11 3 L11 5.2 L13.2 5.2" fill="#cfe0fb"/></svg>
<div class="abs" style="left:276.50px;top:915.00px;width:16.4px;height:16.4px;background:#2d7ff5;border-radius:3px"></div>
<svg class="abs" style="left:276.50px;top:915.00px" width="16" height="16" viewBox="0 0 16 16"><rect x="6.4" y="3" width="7" height="7.6" rx="1.3" fill="none" stroke="#fff" stroke-width="1.3"/><rect x="3.9" y="5.6" width="6.4" height="7.4" rx="1.3" fill="#2d7ff5" stroke="#fff" stroke-width="1.3"/><path d="M8.2 6.2 L8.2 9 L10.6 9" fill="none" stroke="#fff" stroke-width="1.4"/></svg>
<div class="abs" style="left:298.00px;top:915.00px;width:16.4px;height:16.4px;background:#2d7ff5;border-radius:3px"></div>
<svg class="abs" style="left:298.00px;top:915.00px" width="16" height="16" viewBox="0 0 16 16"><path d="M8.3 3.6 L10.2 3.6 C10.4 5 11.3 5.9 12.8 6 L12.8 7.8 C11.8 7.8 10.9 7.5 10.2 7 L10.2 10.2 C10.2 12.1 8.8 13.2 7.1 13.2 C5.3 13.2 4 11.9 4 10.3 C4 8.5 5.5 7.2 7.5 7.4 L7.5 9.2 C6.5 9 5.8 9.6 5.8 10.3 C5.8 11.1 6.4 11.5 7.1 11.5 C7.9 11.5 8.3 11 8.3 10.1 Z" fill="#fff"/></svg>
<div class="abs" style="left:319.50px;top:915.00px;width:16.4px;height:16.4px;background:#2d7ff5;border-radius:3px"></div>
<svg class="abs" style="left:319.50px;top:915.00px" width="16" height="16" viewBox="0 0 16 16"><path d="M8.4 12.4 L4.4 8.4 C3 7 3.2 4.9 4.8 4.2 C6.2 3.6 7.6 4.1 8.4 5.3 C9.2 4.1 10.6 3.6 12 4.2 C13.6 4.9 13.8 7 12.4 8.4 Z" fill="none" stroke="#fff" stroke-width="1.5" stroke-linejoin="round"/></svg>
<div class="abs" style="left:341.00px;top:915.00px;width:16.4px;height:16.4px;background:#2d7ff5;border-radius:3px"></div>
<svg class="abs" style="left:341.00px;top:915.00px" width="16" height="16" viewBox="0 0 16 16"><path d="M4.6 3 L12.2 3 L12.2 4.4 L4.6 4.4 Z" fill="#fff"/><path d="M5.6 5.4 L11.8 5.4 L12.4 8.4 L6.4 8.4 Z" fill="none" stroke="#fff" stroke-width="1.1"/><path d="M3.2 12 C4.6 9.6 6.6 9.2 8.2 10.2 L10.6 9.6 C11.6 9.4 12.6 10 13.2 10.8 L13.2 12 Z" fill="#fff"/><path d="M5.2 10.6 L9 9.2" stroke="#2d7ff5" stroke-width="0.8"/></svg>
<div class="abs" style="left:534.80px;top:906.30px;width:19.2px;height:19px;background:#2d7ff5;border-radius:3.5px;border:1px solid #fff;box-shadow:0 2px 5px rgba(45,127,245,0.25)"></div>
<svg class="abs" style="left:534.80px;top:906.30px" width="19" height="19" viewBox="0 0 19 19"><rect x="5" y="5.2" width="9.6" height="8.6" rx="2" fill="none" stroke="#fff" stroke-width="1.2"/><path d="M8.2 7.3 L11.4 9.5 L8.2 11.7 Z" fill="none" stroke="#fff" stroke-width="1"/></svg>
<div class="abs" style="left:628.40px;top:897.38px;font-size:11.3px;line-height:15px;color:#333;font-weight:normal;white-space:nowrap;">7,639</div>
<div class="abs" style="left:628.40px;top:917.68px;font-size:11.3px;line-height:15px;color:#333;font-weight:normal;white-space:nowrap;">($273,934.54)</div>
<svg class="abs" style="left:742.20px;top:909.50px" width="7" height="11" viewBox="0 0 7 11"><path d="M3.2 10.4 L3.2 1.2 M0.6 3.8 L3.2 1.0 L5.8 3.8" fill="none" stroke="#f5222d" stroke-width="1.3"/></svg>
<div class="abs" style="left:755.80px;top:907.48px;font-size:11.3px;line-height:15px;color:#333;font-weight:normal;white-space:nowrap;">14.08%</div>
<div class="abs" style="left:851.80px;top:888.58px;font-size:11.3px;line-height:15px;color:#333;font-weight:normal;white-space:nowrap;">3,921</div>
<div class="abs" style="left:851.80px;top:908.08px;font-size:11.3px;line-height:15px;color:#999;font-weight:normal;white-space:nowrap;">($140,607.</div>
<div class="abs" style="left:851.80px;top:927.08px;font-size:11.3px;line-height:15px;color:#999;font-weight:normal;white-space:nowrap;">06)</div>
<svg class="abs" style="left:930.60px;top:909.50px" width="7" height="11" viewBox="0 0 7 11"><path d="M3.2 10.4 L3.2 1.2 M0.6 3.8 L3.2 1.0 L5.8 3.8" fill="none" stroke="#f5222d" stroke-width="1.3"/></svg>
<div class="abs" style="left:944.50px;top:907.48px;font-size:11.3px;line-height:15px;color:#333;font-weight:normal;white-space:nowrap;">71.37%</div>
<div class="abs" style="left:1019.50px;top:897.78px;font-size:11.3px;line-height:15px;color:#333;font-weight:normal;white-space:nowrap;">25,151</div>
<div class="abs" style="left:1019.50px;top:914.58px;font-size:11.3px;line-height:15px;color:#333;font-weight:normal;white-space:nowrap;">($901,914.86)</div>
<div class="abs" style="left:1130.80px;top:897.78px;font-size:11.3px;line-height:15px;color:#333;font-weight:normal;white-space:nowrap;">$35.86</div>
<div class="abs" style="left:1130.80px;top:914.58px;font-size:11.3px;line-height:15px;color:#333;font-weight:normal;white-space:nowrap;">($59)</div>
<div class="abs" style="left:1242.70px;top:907.08px;font-size:11.3px;line-height:15px;color:#333;font-weight:normal;white-space:nowrap;">in Water Guns &amp; Snow ...</div>
<div class="abs" style="left:1391.90px;top:907.50px;width:41.5px;height:16px;overflow:hidden;"><div style="position:absolute;left:0;top:0;font-size:11.3px;line-height:15px;color:#333;white-space:nowrap">CGC TC</div></div>
<div class="abs" style="left:170.20px;top:976.75px;width:13px;height:13.3px;border:1.5px solid #3d84f5;border-radius:2.5px;background:#fff"></div>
<svg class="abs" style="left:208.50px;top:962.00px" width="37" height="37" viewBox="0 0 37 37"><defs><clipPath id="pc9"><circle cx="18.5" cy="18.5" r="18.5"/></clipPath></defs><g clip-path="url(#pc9)"><rect width="37" height="37" fill="#eaf2f8"/>
<path d="M0 16 C8 18 14 14 22 16 C28 17 33 15 37 16 L37 37 L0 37 Z" fill="#a9cde6"/>
<path d="M0 24 C10 22 20 26 37 22 L37 37 L0 37 Z" fill="#d3e6f2"/>
<path d="M10 9 L28 5 L31 13 L26 27 L13 30 L9 20 Z" fill="#f7f7f7"/>
<path d="M13 30 L26 27 L22 22 Z" fill="#dde3e8"/>
<path d="M24 3 L32 2 L34 6 L26 8 Z" fill="#e8c3a4"/></g></svg>
<div class="abs" style="left:255.00px;top:965.48px;font-size:11.3px;line-height:15px;color:#333;font-weight:normal;white-space:nowrap;">UFIST 2-Piece Cervical Massage Pillow Set - Erg...</div>
<div class="abs" style="left:255.00px;top:983.50px;width:16.4px;height:16.4px;background:#2d7ff5;border-radius:3px"></div>
<svg class="abs" style="left:255.00px;top:983.50px" width="16" height="16" viewBox="0 0 16 16"><path d="M3.8 5.2 L6 5.2 L6 12.8 L3.8 12.8 Z" fill="#fff" opacity="0.85"/><path d="M6.4 3 L11 3 L13.2 5.2 L13.2 12.8 L6.4 12.8 Z" fill="#fff"/><path d="M11 3 L11 5.2 L13.2 5.2" fill="#cfe0fb"/></svg>
<div class="abs" style="left:276.50px;top:983.50px;width:16.4px;height:16.4px;background:#2d7ff5;border-radius:3px"></div>
<svg class="abs" style="left:276.50px;top:983.50px" width="16" height="16" viewBox="0 0 16 16"><rect x="6.4" y="3" width="7" height="7.6" rx="1.3" fill="none" stroke="#fff" stroke-width="1.3"/><rect x="3.9" y="5.6" width="6.4" height="7.4" rx="1.3" fill="#2d7ff5" stroke="#fff" stroke-width="1.3"/><path d="M8.2 6.2 L8.2 9 L10.6 9" fill="none" stroke="#fff" stroke-width="1.4"/></svg>
<div class="abs" style="left:298.00px;top:983.50px;width:16.4px;height:16.4px;background:#2d7ff5;border-radius:3px"></div>
<svg class="abs" style="left:298.00px;top:983.50px" width="16" height="16" viewBox="0 0 16 16"><path d="M8.3 3.6 L10.2 3.6 C10.4 5 11.3 5.9 12.8 6 L12.8 7.8 C11.8 7.8 10.9 7.5 10.2 7 L10.2 10.2 C10.2 12.1 8.8 13.2 7.1 13.2 C5.3 13.2 4 11.9 4 10.3 C4 8.5 5.5 7.2 7.5 7.4 L7.5 9.2 C6.5 9 5.8 9.6 5.8 10.3 C5.8 11.1 6.4 11.5 7.1 11.5 C7.9 11.5 8.3 11 8.3 10.1 Z" fill="#fff"/></svg>
<div class="abs" style="left:319.50px;top:983.50px;width:16.4px;height:16.4px;background:#2d7ff5;border-radius:3px"></div>
<svg class="abs" style="left:319.50px;top:983.50px" width="16" height="16" viewBox="0 0 16 16"><path d="M8.4 12.4 L4.4 8.4 C3 7 3.2 4.9 4.8 4.2 C6.2 3.6 7.6 4.1 8.4 5.3 C9.2 4.1 10.6 3.6 12 4.2 C13.6 4.9 13.8 7 12.4 8.4 Z" fill="none" stroke="#fff" stroke-width="1.5" stroke-linejoin="round"/></svg>
<div class="abs" style="left:341.00px;top:983.50px;width:16.4px;height:16.4px;background:#2d7ff5;border-radius:3px"></div>
<svg class="abs" style="left:341.00px;top:983.50px" width="16" height="16" viewBox="0 0 16 16"><path d="M4.6 3 L12.2 3 L12.2 4.4 L4.6 4.4 Z" fill="#fff"/><path d="M5.6 5.4 L11.8 5.4 L12.4 8.4 L6.4 8.4 Z" fill="none" stroke="#fff" stroke-width="1.1"/><path d="M3.2 12 C4.6 9.6 6.6 9.2 8.2 10.2 L10.6 9.6 C11.6 9.4 12.6 10 13.2 10.8 L13.2 12 Z" fill="#fff"/><path d="M5.2 10.6 L9 9.2" stroke="#2d7ff5" stroke-width="0.8"/></svg>
<div class="abs" style="left:534.80px;top:974.80px;width:19.2px;height:19px;background:#2d7ff5;border-radius:3.5px;border:1px solid #fff;box-shadow:0 2px 5px rgba(45,127,245,0.25)"></div>
<svg class="abs" style="left:534.80px;top:974.80px" width="19" height="19" viewBox="0 0 19 19"><rect x="5" y="5.2" width="9.6" height="8.6" rx="2" fill="none" stroke="#fff" stroke-width="1.2"/><path d="M8.2 7.3 L11.4 9.5 L8.2 11.7 Z" fill="none" stroke="#fff" stroke-width="1"/></svg>
<div class="abs" style="left:628.40px;top:965.88px;font-size:11.3px;line-height:15px;color:#333;font-weight:normal;white-space:nowrap;">7,577</div>
<div class="abs" style="left:628.40px;top:986.18px;font-size:11.3px;line-height:15px;color:#333;font-weight:normal;white-space:nowrap;">($83,271.23)</div>
<svg class="abs" style="left:742.20px;top:978.00px" width="7" height="11" viewBox="0 0 7 11"><path d="M3.2 10.4 L3.2 1.2 M0.6 3.8 L3.2 1.0 L5.8 3.8" fill="none" stroke="#f5222d" stroke-width="1.3"/></svg>
<div class="abs" style="left:755.80px;top:975.98px;font-size:11.3px;line-height:15px;color:#333;font-weight:normal;white-space:nowrap;">6.84%</div>
<div class="abs" style="left:851.80px;top:957.08px;font-size:11.3px;line-height:15px;color:#333;font-weight:normal;white-space:nowrap;">1,127</div>
<div class="abs" style="left:851.80px;top:976.58px;font-size:11.3px;line-height:15px;color:#999;font-weight:normal;white-space:nowrap;">($12,385.7</div>
<div class="abs" style="left:851.80px;top:995.58px;font-size:11.3px;line-height:15px;color:#999;font-weight:normal;white-space:nowrap;">3)</div>
<svg class="abs" style="left:930.60px;top:978.00px" width="7" height="11" viewBox="0 0 7 11"><path d="M3.2 0 L3.2 9.2 M0.6 6.6 L3.2 9.4 L5.8 6.6" fill="none" stroke="#1faa1f" stroke-width="1.3"/></svg>
<div class="abs" style="left:944.50px;top:975.98px;font-size:11.3px;line-height:15px;color:#333;font-weight:normal;white-space:nowrap;">25.76%</div>
<div class="abs" style="left:1019.50px;top:966.28px;font-size:11.3px;line-height:15px;color:#333;font-weight:normal;white-space:nowrap;">13,661</div>
<div class="abs" style="left:1019.50px;top:983.08px;font-size:11.3px;line-height:15px;color:#333;font-weight:normal;white-space:nowrap;">($150,134.39)</div>
<div class="abs" style="left:1130.80px;top:966.28px;font-size:11.3px;line-height:15px;color:#333;font-weight:normal;white-space:nowrap;">$10.99</div>
<div class="abs" style="left:1130.80px;top:983.08px;font-size:11.3px;line-height:15px;color:#333;font-weight:normal;white-space:nowrap;">($39.99)</div>
<div class="abs" style="left:1242.70px;top:975.58px;font-size:11.3px;line-height:15px;color:#333;font-weight:normal;white-space:nowrap;">in Soap Dishes</div>
<div class="abs" style="left:1391.90px;top:976.00px;width:41.5px;height:16px;overflow:hidden;"><div style="position:absolute;left:0;top:0;font-size:11.3px;line-height:15px;color:#333;white-space:nowrap">Ufist-Dream</div></div>
<div class="abs" style="left:170.20px;top:1045.25px;width:13px;height:13.3px;border:1.5px solid #3d84f5;border-radius:2.5px;background:#fff"></div>
<svg class="abs" style="left:208.50px;top:1030.50px" width="37" height="37" viewBox="0 0 37 37"><defs><clipPath id="pc10"><circle cx="18.5" cy="18.5" r="18.5"/></clipPath></defs><g clip-path="url(#pc10)"><rect width="37" height="37" fill="#fff"/>
<path d="M3 8 L9 5 L12 10 L11 30 L7 33 L4 28 Z" fill="#c9a33a"/>
<path d="M4 14 L10 13 L10 27 L6 29 Z" fill="#1b1b1b"/>
<rect x="6" y="22" width="2" height="1.5" fill="#d33"/>
<rect x="14" y="10" width="4" height="24" fill="#d4af45"/>
<rect x="13.5" y="9" width="5" height="2" fill="#b8912a"/>
<rect x="19" y="20" width="8" height="14" rx="1" fill="#c9a33a"/>
<rect x="21" y="25" width="4" height="4" rx="1" fill="#222"/>
<g fill="#222"><rect x="21" y="3" width="3" height="3"/><rect x="25" y="3" width="3" height="3"/><rect x="21" y="8" width="3" height="3"/><rect x="25" y="8" width="3" height="3"/><rect x="21" y="13" width="3" height="3"/><rect x="25" y="13" width="3" height="3"/><rect x="30" y="7" width="2" height="4"/><rect x="30" y="13" width="2" height="4"/><rect x="29" y="21" width="2" height="4"/><rect x="32" y="21" width="2" height="4"/></g>
<rect x="28" y="28" width="8" height="4" fill="#4a8ac8"/></g></svg>
<div class="abs" style="left:255.00px;top:1033.98px;font-size:11.3px;line-height:15px;color:#333;font-weight:normal;white-space:nowrap;">3-Piece Professional Blonde Hair Clipper &amp; Trimm...</div>
<div class="abs" style="left:255.00px;top:1052.00px;width:16.4px;height:16.4px;background:#2d7ff5;border-radius:3px"></div>
<svg class="abs" style="left:255.00px;top:1052.00px" width="16" height="16" viewBox="0 0 16 16"><path d="M3.8 5.2 L6 5.2 L6 12.8 L3.8 12.8 Z" fill="#fff" opacity="0.85"/><path d="M6.4 3 L11 3 L13.2 5.2 L13.2 12.8 L6.4 12.8 Z" fill="#fff"/><path d="M11 3 L11 5.2 L13.2 5.2" fill="#cfe0fb"/></svg>
<div class="abs" style="left:276.50px;top:1052.00px;width:16.4px;height:16.4px;background:#2d7ff5;border-radius:3px"></div>
<svg class="abs" style="left:276.50px;top:1052.00px" width="16" height="16" viewBox="0 0 16 16"><rect x="6.4" y="3" width="7" height="7.6" rx="1.3" fill="none" stroke="#fff" stroke-width="1.3"/><rect x="3.9" y="5.6" width="6.4" height="7.4" rx="1.3" fill="#2d7ff5" stroke="#fff" stroke-width="1.3"/><path d="M8.2 6.2 L8.2 9 L10.6 9" fill="none" stroke="#fff" stroke-width="1.4"/></svg>
<div class="abs" style="left:298.00px;top:1052.00px;width:16.4px;height:16.4px;background:#2d7ff5;border-radius:3px"></div>
<svg class="abs" style="left:298.00px;top:1052.00px" width="16" height="16" viewBox="0 0 16 16"><path d="M8.3 3.6 L10.2 3.6 C10.4 5 11.3 5.9 12.8 6 L12.8 7.8 C11.8 7.8 10.9 7.5 10.2 7 L10.2 10.2 C10.2 12.1 8.8 13.2 7.1 13.2 C5.3 13.2 4 11.9 4 10.3 C4 8.5 5.5 7.2 7.5 7.4 L7.5 9.2 C6.5 9 5.8 9.6 5.8 10.3 C5.8 11.1 6.4 11.5 7.1 11.5 C7.9 11.5 8.3 11 8.3 10.1 Z" fill="#fff"/></svg>
<div class="abs" style="left:319.50px;top:1052.00px;width:16.4px;height:16.4px;background:#2d7ff5;border-radius:3px"></div>
<svg class="abs" style="left:319.50px;top:1052.00px" width="16" height="16" viewBox="0 0 16 16"><path d="M8.4 12.4 L4.4 8.4 C3 7 3.2 4.9 4.8 4.2 C6.2 3.6 7.6 4.1 8.4 5.3 C9.2 4.1 10.6 3.6 12 4.2 C13.6 4.9 13.8 7 12.4 8.4 Z" fill="none" stroke="#fff" stroke-width="1.5" stroke-linejoin="round"/></svg>
<div class="abs" style="left:341.00px;top:1052.00px;width:16.4px;height:16.4px;background:#2d7ff5;border-radius:3px"></div>
<svg class="abs" style="left:341.00px;top:1052.00px" width="16" height="16" viewBox="0 0 16 16"><path d="M4.6 3 L12.2 3 L12.2 4.4 L4.6 4.4 Z" fill="#fff"/><path d="M5.6 5.4 L11.8 5.4 L12.4 8.4 L6.4 8.4 Z" fill="none" stroke="#fff" stroke-width="1.1"/><path d="M3.2 12 C4.6 9.6 6.6 9.2 8.2 10.2 L10.6 9.6 C11.6 9.4 12.6 10 13.2 10.8 L13.2 12 Z" fill="#fff"/><path d="M5.2 10.6 L9 9.2" stroke="#2d7ff5" stroke-width="0.8"/></svg>
<div class="abs" style="left:534.80px;top:1043.30px;width:19.2px;height:19px;background:#2d7ff5;border-radius:3.5px;border:1px solid #fff;box-shadow:0 2px 5px rgba(45,127,245,0.25)"></div>
<svg class="abs" style="left:534.80px;top:1043.30px" width="19" height="19" viewBox="0 0 19 19"><rect x="5" y="5.2" width="9.6" height="8.6" rx="2" fill="none" stroke="#fff" stroke-width="1.2"/><path d="M8.2 7.3 L11.4 9.5 L8.2 11.7 Z" fill="none" stroke="#fff" stroke-width="1"/></svg>
<div class="abs" style="left:628.40px;top:1034.38px;font-size:11.3px;line-height:15px;color:#333;font-weight:normal;white-space:nowrap;">7,189</div>
<div class="abs" style="left:628.40px;top:1054.68px;font-size:11.3px;line-height:15px;color:#333;font-weight:normal;white-space:nowrap;">($143,708.11)</div>
<svg class="abs" style="left:742.20px;top:1046.50px" width="7" height="11" viewBox="0 0 7 11"><path d="M3.2 0 L3.2 9.2 M0.6 6.6 L3.2 9.4 L5.8 6.6" fill="none" stroke="#1faa1f" stroke-width="1.3"/></svg>
<div class="abs" style="left:755.80px;top:1044.48px;font-size:11.3px;line-height:15px;color:#333;font-weight:normal;white-space:nowrap;">4.59%</div>
<div class="abs" style="left:851.80px;top:1025.58px;font-size:11.3px;line-height:15px;color:#333;font-weight:normal;white-space:nowrap;">1,238</div>
<div class="abs" style="left:851.80px;top:1045.08px;font-size:11.3px;line-height:15px;color:#999;font-weight:normal;white-space:nowrap;">($24,747.6</div>
<div class="abs" style="left:851.80px;top:1064.08px;font-size:11.3px;line-height:15px;color:#999;font-weight:normal;white-space:nowrap;">2)</div>
<svg class="abs" style="left:930.60px;top:1046.50px" width="7" height="11" viewBox="0 0 7 11"><path d="M3.2 0 L3.2 9.2 M0.6 6.6 L3.2 9.4 L5.8 6.6" fill="none" stroke="#1faa1f" stroke-width="1.3"/></svg>
<div class="abs" style="left:944.50px;top:1044.48px;font-size:11.3px;line-height:15px;color:#333;font-weight:normal;white-space:nowrap;">20.74%</div>
<div class="abs" style="left:1019.50px;top:1034.78px;font-size:11.3px;line-height:15px;color:#333;font-weight:normal;white-space:nowrap;">26,665</div>
<div class="abs" style="left:1019.50px;top:1051.58px;font-size:11.3px;line-height:15px;color:#333;font-weight:normal;white-space:nowrap;">($533,033.35)</div>
<div class="abs" style="left:1130.80px;top:1034.78px;font-size:11.3px;line-height:15px;color:#333;font-weight:normal;white-space:nowrap;">$19.99</div>
<div class="abs" style="left:1130.80px;top:1051.58px;font-size:11.3px;line-height:15px;color:#333;font-weight:normal;white-space:nowrap;">--</div>
<div class="abs" style="left:1242.70px;top:1044.08px;font-size:11.3px;line-height:15px;color:#333;font-weight:normal;white-space:nowrap;">in Hair Trimmers &amp; Clip...</div>
<div class="abs" style="left:1391.90px;top:1044.50px;width:41.5px;height:16px;overflow:hidden;"><div style="position:absolute;left:0;top:0;font-size:11.3px;line-height:15px;color:#333;white-space:nowrap">MOVATE</div></div>
<div class="abs" style="left:170.20px;top:1113.75px;width:13px;height:13.3px;border:1.5px solid #3d84f5;border-radius:2.5px;background:#fff"></div>
<svg class="abs" style="left:208.50px;top:1099.00px" width="37" height="37" viewBox="0 0 37 37"><defs><clipPath id="pc11"><circle cx="18.5" cy="18.5" r="18.5"/></clipPath></defs><g clip-path="url(#pc11)"><rect width="37" height="37" fill="#fff"/>
<path d="M5 12 L12 8 L20 10 L24 4 L25 6 L21 14 L19 34 L6 34 L7 20 L3 18 Z" fill="#5d5d5d"/>
<path d="M8 14 L18 14 L17 33 L8 33 Z" fill="#d9621e"/>
<circle cx="11" cy="6.5" r="2" fill="#a66a4a"/>
<path d="M22 12 L24 7 L26 9 L30 12 L34 18 L34 33 L23 33 L25 22 Z" fill="#ece3d2"/>
<path d="M24 12 L27 7 L25 5 Z" fill="#888"/>
<circle cx="28" cy="9" r="1.8" fill="#b9896a"/>
<rect x="7" y="34" width="9" height="2" fill="#f26a1b"/></g></svg>
<div class="abs" style="left:255.00px;top:1102.48px;font-size:11.3px;line-height:15px;color:#333;font-weight:normal;white-space:nowrap;">【Black Friday】DOWNCOOL Wearable Electric ...</div>
<div class="abs" style="left:255.00px;top:1120.50px;width:16.4px;height:16.4px;background:#2d7ff5;border-radius:3px"></div>
<svg class="abs" style="left:255.00px;top:1120.50px" width="16" height="16" viewBox="0 0 16 16"><path d="M3.8 5.2 L6 5.2 L6 12.8 L3.8 12.8 Z" fill="#fff" opacity="0.85"/><path d="M6.4 3 L11 3 L13.2 5.2 L13.2 12.8 L6.4 12.8 Z" fill="#fff"/><path d="M11 3 L11 5.2 L13.2 5.2" fill="#cfe0fb"/></svg>
<div class="abs" style="left:276.50px;top:1120.50px;width:16.4px;height:16.4px;background:#2d7ff5;border-radius:3px"></div>
<svg class="abs" style="left:276.50px;top:1120.50px" width="16" height="16" viewBox="0 0 16 16"><rect x="6.4" y="3" width="7" height="7.6" rx="1.3" fill="none" stroke="#fff" stroke-width="1.3"/><rect x="3.9" y="5.6" width="6.4" height="7.4" rx="1.3" fill="#2d7ff5" stroke="#fff" stroke-width="1.3"/><path d="M8.2 6.2 L8.2 9 L10.6 9" fill="none" stroke="#fff" stroke-width="1.4"/></svg>
<div class="abs" style="left:298.00px;top:1120.50px;width:16.4px;height:16.4px;background:#2d7ff5;border-radius:3px"></div>
<svg class="abs" style="left:298.00px;top:1120.50px" width="16" height="16" viewBox="0 0 16 16"><path d="M8.3 3.6 L10.2 3.6 C10.4 5 11.3 5.9 12.8 6 L12.8 7.8 C11.8 7.8 10.9 7.5 10.2 7 L10.2 10.2 C10.2 12.1 8.8 13.2 7.1 13.2 C5.3 13.2 4 11.9 4 10.3 C4 8.5 5.5 7.2 7.5 7.4 L7.5 9.2 C6.5 9 5.8 9.6 5.8 10.3 C5.8 11.1 6.4 11.5 7.1 11.5 C7.9 11.5 8.3 11 8.3 10.1 Z" fill="#fff"/></svg>
<div class="abs" style="left:319.50px;top:1120.50px;width:16.4px;height:16.4px;background:#2d7ff5;border-radius:3px"></div>
<svg class="abs" style="left:319.50px;top:1120.50px" width="16" height="16" viewBox="0 0 16 16"><path d="M8.4 12.4 L4.4 8.4 C3 7 3.2 4.9 4.8 4.2 C6.2 3.6 7.6 4.1 8.4 5.3 C9.2 4.1 10.6 3.6 12 4.2 C13.6 4.9 13.8 7 12.4 8.4 Z" fill="none" stroke="#fff" stroke-width="1.5" stroke-linejoin="round"/></svg>
<div class="abs" style="left:341.00px;top:1120.50px;width:16.4px;height:16.4px;background:#2d7ff5;border-radius:3px"></div>
<svg class="abs" style="left:341.00px;top:1120.50px" width="16" height="16" viewBox="0 0 16 16"><path d="M4.6 3 L12.2 3 L12.2 4.4 L4.6 4.4 Z" fill="#fff"/><path d="M5.6 5.4 L11.8 5.4 L12.4 8.4 L6.4 8.4 Z" fill="none" stroke="#fff" stroke-width="1.1"/><path d="M3.2 12 C4.6 9.6 6.6 9.2 8.2 10.2 L10.6 9.6 C11.6 9.4 12.6 10 13.2 10.8 L13.2 12 Z" fill="#fff"/><path d="M5.2 10.6 L9 9.2" stroke="#2d7ff5" stroke-width="0.8"/></svg>
<div class="abs" style="left:534.80px;top:1111.80px;width:19.2px;height:19px;background:#2d7ff5;border-radius:3.5px;border:1px solid #fff;box-shadow:0 2px 5px rgba(45,127,245,0.25)"></div>
<svg class="abs" style="left:534.80px;top:1111.80px" width="19" height="19" viewBox="0 0 19 19"><rect x="5" y="5.2" width="9.6" height="8.6" rx="2" fill="none" stroke="#fff" stroke-width="1.2"/><path d="M8.2 7.3 L11.4 9.5 L8.2 11.7 Z" fill="none" stroke="#fff" stroke-width="1"/></svg>
<div class="abs" style="left:628.40px;top:1102.88px;font-size:11.3px;line-height:15px;color:#333;font-weight:normal;white-space:nowrap;">7,167</div>
<div class="abs" style="left:628.40px;top:1123.18px;font-size:11.3px;line-height:15px;color:#333;font-weight:normal;white-space:nowrap;">($472,950.33)</div>
<svg class="abs" style="left:742.20px;top:1115.00px" width="7" height="11" viewBox="0 0 7 11"><path d="M3.2 10.4 L3.2 1.2 M0.6 3.8 L3.2 1.0 L5.8 3.8" fill="none" stroke="#f5222d" stroke-width="1.3"/></svg>
<div class="abs" style="left:755.80px;top:1112.98px;font-size:11.3px;line-height:15px;color:#333;font-weight:normal;white-space:nowrap;">229.21%</div>
<div class="abs" style="left:851.80px;top:1094.08px;font-size:11.3px;line-height:15px;color:#333;font-weight:normal;white-space:nowrap;">1,865</div>
<div class="abs" style="left:851.80px;top:1113.58px;font-size:11.3px;line-height:15px;color:#999;font-weight:normal;white-space:nowrap;">($123,071.</div>
<div class="abs" style="left:851.80px;top:1132.58px;font-size:11.3px;line-height:15px;color:#999;font-weight:normal;white-space:nowrap;">35)</div>
<svg class="abs" style="left:930.60px;top:1115.00px" width="7" height="11" viewBox="0 0 7 11"><path d="M3.2 10.4 L3.2 1.2 M0.6 3.8 L3.2 1.0 L5.8 3.8" fill="none" stroke="#f5222d" stroke-width="1.3"/></svg>
<div class="abs" style="left:944.50px;top:1112.98px;font-size:11.3px;line-height:15px;color:#333;font-weight:normal;white-space:nowrap;">28.27%</div>
<div class="abs" style="left:1019.50px;top:1103.28px;font-size:11.3px;line-height:15px;color:#333;font-weight:normal;white-space:nowrap;">14,862</div>
<div class="abs" style="left:1019.50px;top:1120.08px;font-size:11.3px;line-height:15px;color:#333;font-weight:normal;white-space:nowrap;">($980,743.38)</div>
<div class="abs" style="left:1130.80px;top:1103.28px;font-size:11.3px;line-height:15px;color:#333;font-weight:normal;white-space:nowrap;">$65.99</div>
<div class="abs" style="left:1130.80px;top:1120.08px;font-size:11.3px;line-height:15px;color:#333;font-weight:normal;white-space:nowrap;">($99.99)</div>
<div class="abs" style="left:1242.70px;top:1112.58px;font-size:11.3px;line-height:15px;color:#333;font-weight:normal;white-space:nowrap;">in Electric Blankets</div>
<div class="abs" style="left:1391.90px;top:1113.00px;width:41.5px;height:16px;overflow:hidden;"><div style="position:absolute;left:0;top:0;font-size:11.3px;line-height:15px;color:#333;white-space:nowrap">DOWNCOOL</div></div>
<div class="abs" style="left:1432.50px;top:334.50px;width:8px;height:563px;background:#2f7cf6;border-radius:4px"></div>
<div class="abs" style="left:143.3px;top:413.5px;width:1.7px;height:5px;background:#3b7ff0;border-radius:1px"></div>
<div class="abs" style="left:143.3px;top:482px;width:1.7px;height:2px;background:#3b7ff0"></div>
</div>
</body></html>
